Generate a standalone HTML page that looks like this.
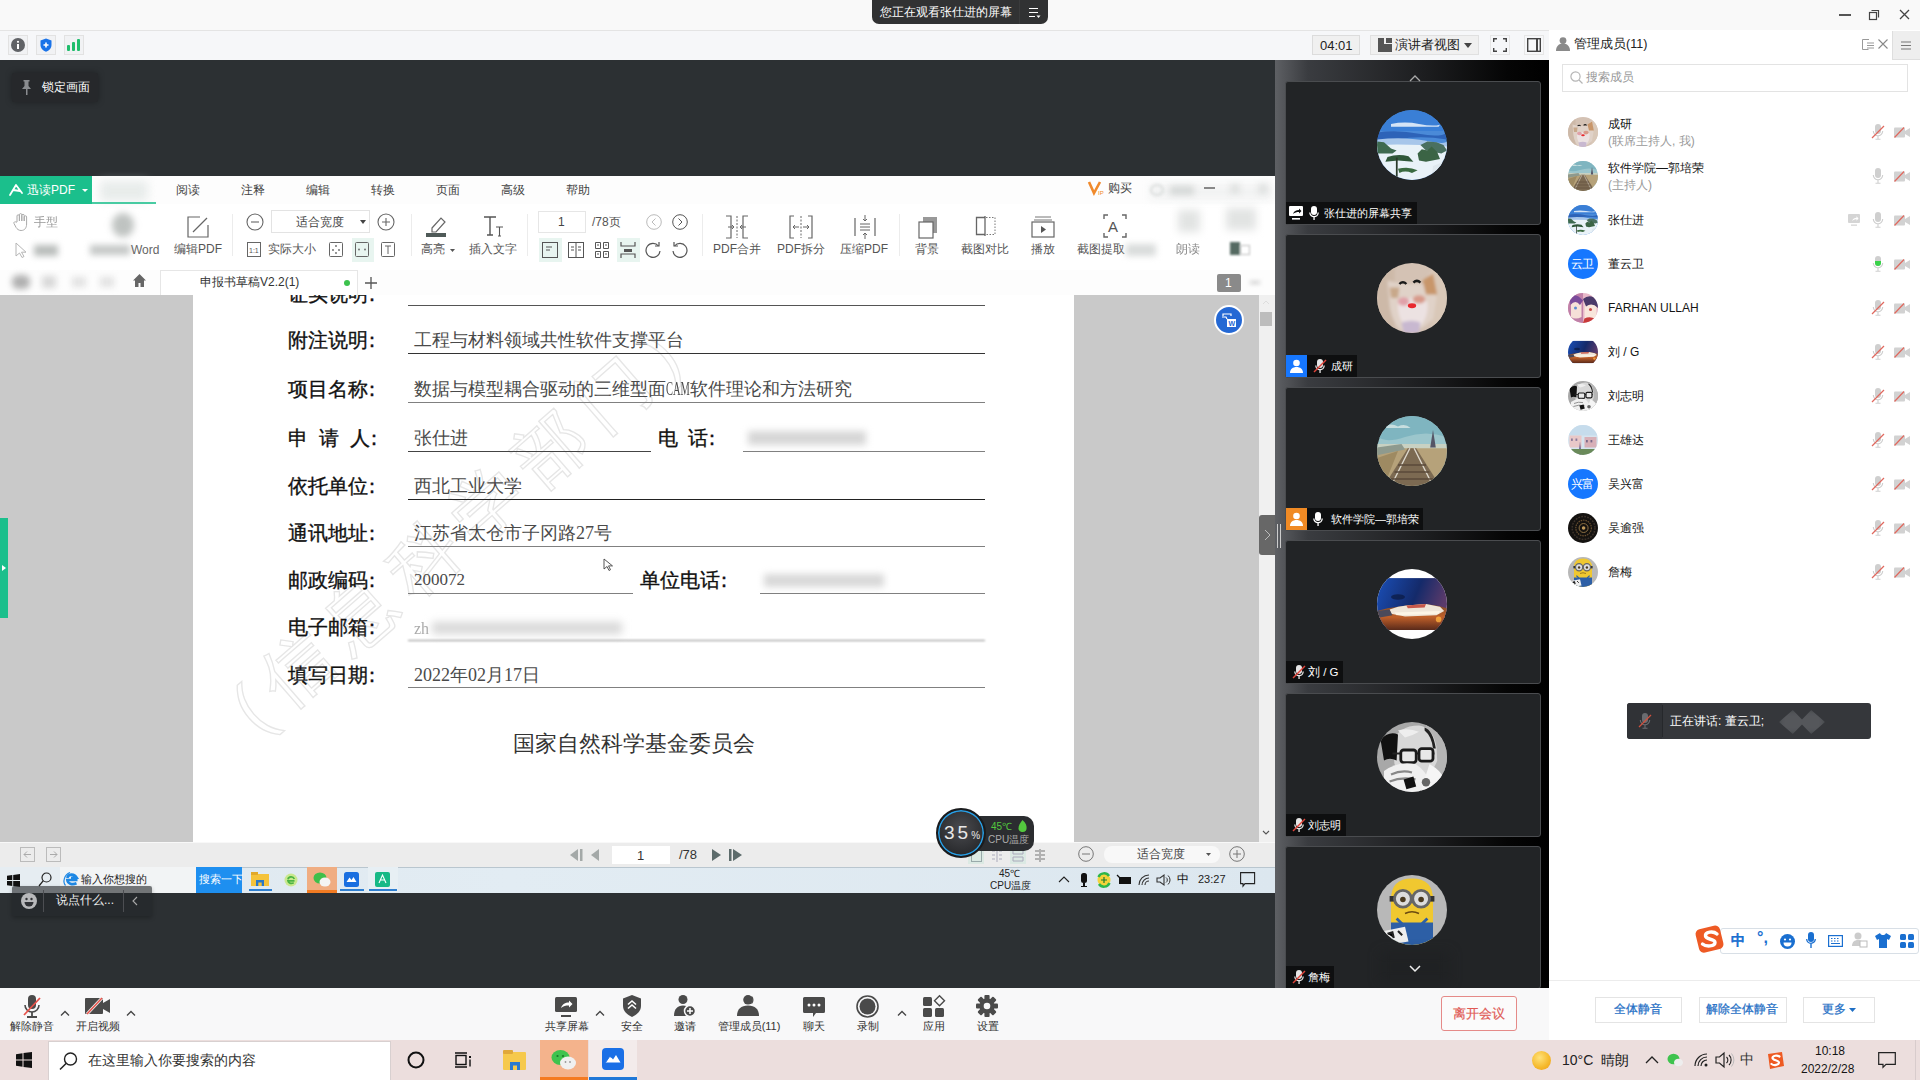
<!DOCTYPE html>
<html><head><meta charset="utf-8">
<style>
*{box-sizing:border-box}
html,body{margin:0;padding:0}
body{width:1920px;height:1080px;overflow:hidden;position:relative;font-family:"Liberation Sans",sans-serif;background:#f8f8f8;color:#222}
.a{position:absolute}
.t{position:absolute;white-space:nowrap;line-height:1}
svg{position:absolute;overflow:visible}
.lb{font-size:20px;color:#111;-webkit-text-stroke:.35px #111}
.vl{font-size:18px;color:#4a4a4a;font-family:"Liberation Serif",serif}
</style></head><body>

<!-- ===== title bar ===== -->
<div class="a" style="left:0;top:0;width:1920px;height:30px;background:#f9f9f9"></div>
<div class="a" style="left:0;top:30px;width:1549px;height:1px;background:#e4e4e4"></div>
<div class="a" style="left:872px;top:0;width:176px;height:24px;background:#313233;border-radius:0 0 7px 7px"></div>
<div class="a" style="left:1019px;top:0;width:1px;height:24px;background:#3a3b3c"></div>
<div class="t" style="left:880px;top:6px;font-size:12px;color:#fff">您正在观看张仕进的屏幕</div>
<svg style="left:1028px;top:7px" width="14" height="12"><path d="M1 1.5h9M1 5.5h9M1 9.5h6" stroke="#fff" stroke-width="1"/><path d="M8.5 8.5h4l-2 2.5z" fill="#fff"/></svg>
<!-- window controls -->
<div class="a" style="left:1839px;top:14px;width:12px;height:1.5px;background:#555"></div>
<svg style="left:1869px;top:9px" width="12" height="12"><rect x="0.5" y="3.5" width="7" height="7" fill="none" stroke="#444" stroke-width="1.2"/><path d="M2.5 1.5h7v7" fill="none" stroke="#444" stroke-width="1.2"/></svg>
<svg style="left:1899px;top:9px" width="12" height="12"><path d="M1 1l9 9M10 1l-9 9" stroke="#444" stroke-width="1.3"/></svg>

<!-- ===== toolbar row ===== -->
<div class="a" style="left:0;top:31px;width:1549px;height:29px;background:#f6f7f9"></div>
<div class="a" style="left:8px;top:35px;width:20px;height:20px;border:1px solid #e2e2e2;background:#f1f2f4"></div>
<svg style="left:11px;top:38px" width="14" height="14"><circle cx="7" cy="7" r="7" fill="#606266"/><rect x="6" y="6" width="2" height="5" fill="#fff"/><circle cx="7" cy="3.8" r="1.1" fill="#fff"/></svg>
<div class="a" style="left:36px;top:35px;width:20px;height:20px;border:1px solid #e2e2e2;background:#f1f2f4"></div>
<svg style="left:40px;top:38px" width="12" height="14"><path d="M6 0.5L11.5 2.5V7C11.5 10.5 9 12.5 6 13.8C3 12.5 0.5 10.5 0.5 7V2.5z" fill="#1a73e8"/><path d="M6 4.5v5M3.5 7h5" stroke="#fff" stroke-width="1.6"/></svg>
<div class="a" style="left:64px;top:35px;width:20px;height:20px;border:1px solid #e2e2e2;background:#f1f2f4"></div>
<svg style="left:67px;top:39px" width="14" height="12"><rect x="0" y="6" width="3" height="6" rx="1" fill="#1fbd6c"/><rect x="5" y="3" width="3" height="9" rx="1" fill="#1fbd6c"/><rect x="10" y="0" width="3" height="12" rx="1" fill="#1fbd6c"/></svg>

<!-- right controls -->
<div class="a" style="left:1312px;top:35px;width:48px;height:20px;border:1px solid #dcdcdc;background:#f0f0f0"></div>
<div class="t" style="left:1320px;top:39px;font-size:13px;color:#222">04:01</div>
<div class="a" style="left:1370px;top:35px;width:109px;height:20px;border:1px solid #e0e0e0;background:#f0f0f0"></div>
<svg style="left:1378px;top:38px" width="14" height="14"><path d="M0 0h6v6h8v8H0z" fill="#555"/><rect x="8" y="0" width="6" height="5" fill="#555"/></svg>
<div class="t" style="left:1395px;top:39px;font-size:12.5px;color:#222">演讲者视图</div>
<svg style="left:1464px;top:43px" width="8" height="5"><path d="M0 0h8L4 5z" fill="#444"/></svg>
<div class="a" style="left:1490px;top:35px;width:20px;height:20px;border:1px solid #e6e6e6"></div>
<svg style="left:1493px;top:38px" width="14" height="14"><path d="M0.7 4V0.7H4M10 0.7h3.3V4M13.3 10v3.3H10M4 13.3H0.7V10" fill="none" stroke="#444" stroke-width="1.4"/></svg>
<div class="a" style="left:1524px;top:35px;width:20px;height:20px;border:1px solid #e6e6e6"></div>
<svg style="left:1527px;top:38px" width="14" height="14"><rect x="0.7" y="0.7" width="12.6" height="12.6" fill="none" stroke="#444" stroke-width="1.4"/><rect x="9" y="1" width="2" height="12" fill="#444"/></svg>

<!-- ===== main dark share area ===== -->
<div class="a" style="left:0;top:60px;width:1275px;height:928px;background:#2c3033"></div>

<!-- ===== PDF window ===== -->
<div class="a" style="left:0;top:176px;width:1275px;height:717px;background:#fff"></div>
<!-- header row -->
<div class="a" style="left:0;top:176px;width:1275px;height:28px;background:#fdfdfd"></div>
<div class="a" style="left:0;top:176px;width:92px;height:28px;background:#1bbf8c"></div>
<svg style="left:9px;top:184px" width="14" height="12"><path d="M1 11L7 1M7 1L13 9M4 6l7 1" stroke="#fff" stroke-width="1.8" fill="none" stroke-linecap="round"/></svg>
<div class="t" style="left:27px;top:184px;font-size:12px;color:#fff">迅读PDF</div>
<svg style="left:82px;top:189px" width="6" height="4"><path d="M0 0h6L3 3z" fill="#fff"/></svg>
<div class="a" style="left:100px;top:181px;width:48px;height:20px;background:#dfe5e3;filter:blur(5px);opacity:.7"></div>
<div class="a" style="left:92px;top:202px;width:64px;height:2px;background:#1bbf8c;opacity:.8"></div>
<div class="t" style="left:176px;top:184px;font-size:12px;color:#444">阅读</div>
<div class="t" style="left:241px;top:184px;font-size:12px;color:#444">注释</div>
<div class="t" style="left:306px;top:184px;font-size:12px;color:#444">编辑</div>
<div class="t" style="left:371px;top:184px;font-size:12px;color:#444">转换</div>
<div class="t" style="left:436px;top:184px;font-size:12px;color:#444">页面</div>
<div class="t" style="left:501px;top:184px;font-size:12px;color:#444">高级</div>
<div class="t" style="left:566px;top:184px;font-size:12px;color:#444">帮助</div>
<!-- vip -->
<svg style="left:1088px;top:181px" width="18" height="14"><path d="M1 1l5 11l6-11" stroke="#f08a2c" stroke-width="2.6" fill="none"/><text x="10" y="14" font-size="6" fill="#f08a2c" font-family="Liberation Sans">IP</text></svg>
<div class="t" style="left:1108px;top:182px;font-size:12px;color:#444">购买</div>
<div class="a" style="left:1150px;top:184px;width:122px;height:16px;background:#f2f3f3;filter:blur(4px)"></div>
<div class="a" style="left:1150px;top:184px;width:14px;height:12px;border-radius:50%;border:2px solid #d9dcdb;filter:blur(1.5px)"></div>
<div class="a" style="left:1170px;top:186px;width:24px;height:9px;background:#d5d8d7;filter:blur(3px)"></div>
<div class="a" style="left:1204px;top:187px;width:11px;height:2px;background:#888;filter:blur(.6px)"></div>
<div class="a" style="left:1230px;top:184px;width:10px;height:10px;background:#e0e2e1;filter:blur(3px)"></div>
<div class="a" style="left:1258px;top:184px;width:10px;height:10px;background:#e0e2e1;filter:blur(3px)"></div>

<!-- ribbon row: left blurred tools -->
<svg style="left:13px;top:213px;filter:blur(.5px)" width="16" height="18"><path d="M4 9V3a1.2 1.2 0 0 1 2.4 0v5V1.8a1.2 1.2 0 0 1 2.4 0V8V2.5a1.2 1.2 0 0 1 2.4 0V8V4a1.2 1.2 0 0 1 2.4 0v7c0 4-2 6.5-5.5 6.5-2.5 0-4-1.5-5-3L1 10.5a1.2 1.2 0 0 1 2-1.3z" fill="none" stroke="#aaa" stroke-width="1"/></svg>
<div class="t" style="left:34px;top:216px;font-size:12px;color:#999;filter:blur(.6px)">手型</div>
<svg style="left:15px;top:242px;filter:blur(.4px)" width="12" height="16"><path d="M1 1v13l3.5-3 2.5 4.5 2-1-2.5-4.3H11z" fill="none" stroke="#b5b5b5" stroke-width="1"/></svg>
<div class="a" style="left:34px;top:245px;width:24px;height:11px;background:#b9bdbb;filter:blur(3px)"></div>
<div class="a" style="left:112px;top:213px;width:22px;height:24px;border-radius:50%;background:#bfc3c1;filter:blur(3.5px)"></div>
<div class="a" style="left:90px;top:245px;width:40px;height:10px;background:#c5c8c7;filter:blur(3px)"></div>
<div class="t" style="left:131px;top:244px;font-size:12px;color:#666">Word</div>
<svg style="left:187px;top:216px" width="22" height="22"><path d="M13 1H1v20h20V9" fill="none" stroke="#666" stroke-width="1.2"/><path d="M6 16L20 2" stroke="#666" stroke-width="1.2"/></svg>
<div class="t" style="left:174px;top:243px;font-size:12px;color:#555">编辑PDF</div>
<div class="a" style="left:232px;top:214px;width:1px;height:42px;background:#ececec"></div>
<!-- zoom -->
<svg style="left:246px;top:213px" width="18" height="18"><circle cx="9" cy="9" r="8" fill="none" stroke="#666" stroke-width="1.1"/><path d="M5 9h8" stroke="#666" stroke-width="1.1"/></svg>
<div class="a" style="left:271px;top:210px;width:99px;height:23px;border:1px solid #e3e3e3;background:#fff"></div>
<div class="t" style="left:296px;top:216px;font-size:12px;color:#444">适合宽度</div>
<svg style="left:360px;top:220px" width="6" height="4"><path d="M0 0h6L3 4z" fill="#444"/></svg>
<svg style="left:377px;top:213px" width="18" height="18"><circle cx="9" cy="9" r="8" fill="none" stroke="#666" stroke-width="1.1"/><path d="M5 9h8M9 5v8" stroke="#666" stroke-width="1.1"/></svg>
<svg style="left:247px;top:242px" width="15" height="15"><rect x="0.5" y="0.5" width="13" height="14" fill="none" stroke="#666" stroke-width="1"/><text x="2" y="11" font-size="7" fill="#555" font-family="Liberation Sans">1:1</text></svg>
<div class="t" style="left:268px;top:243px;font-size:12px;color:#555">实际大小</div>
<svg style="left:329px;top:242px" width="15" height="15"><rect x="0.5" y="0.5" width="13" height="14" rx="1" fill="none" stroke="#666" stroke-width="1"/><circle cx="7" cy="4" r=".9" fill="#666"/><circle cx="4" cy="8" r=".9" fill="#666"/><circle cx="10" cy="8" r=".9" fill="#666"/><circle cx="7" cy="11" r=".9" fill="#666"/></svg>
<div class="a" style="left:352px;top:238px;width:22px;height:24px;background:#e8f5f0"></div>
<svg style="left:355px;top:242px" width="15" height="15"><rect x="0.5" y="0.5" width="13" height="14" rx="1" fill="none" stroke="#666" stroke-width="1"/><circle cx="4" cy="7.5" r=".9" fill="#666"/><circle cx="10" cy="7.5" r=".9" fill="#666"/></svg>
<svg style="left:381px;top:242px" width="15" height="15"><rect x="0.5" y="0.5" width="13" height="14" rx="1" fill="none" stroke="#666" stroke-width="1"/><path d="M4 4h6M7 4v8" stroke="#666" stroke-width="1"/></svg>
<div class="a" style="left:411px;top:214px;width:1px;height:42px;background:#ececec"></div>
<!-- highlight / insert text -->
<svg style="left:424px;top:214px" width="24" height="24"><path d="M8 14l9-10 4 4-9 10h-4z" fill="none" stroke="#666" stroke-width="1.2"/><rect x="2" y="19" width="20" height="4" fill="#4f5a58"/></svg>
<div class="t" style="left:421px;top:243px;font-size:12px;color:#555">高亮</div>
<svg style="left:450px;top:249px" width="5" height="3"><path d="M0 0h5L2.5 3z" fill="#555"/></svg>
<svg style="left:483px;top:215px" width="22" height="22"><path d="M1 2h12M7 2v18M4 20h6" stroke="#555" stroke-width="1.4" fill="none"/><path d="M13 12h7M16.5 12v9M15 21h3" stroke="#555" stroke-width="1.1" fill="none"/></svg>
<div class="t" style="left:469px;top:243px;font-size:12px;color:#555">插入文字</div>
<div class="a" style="left:527px;top:214px;width:1px;height:42px;background:#ececec"></div>
<!-- page nav -->
<div class="a" style="left:538px;top:211px;width:48px;height:22px;border:1px solid #e6e6e6;background:#fff"></div>
<div class="t" style="left:558px;top:216px;font-size:12px;color:#444">1</div>
<div class="t" style="left:592px;top:216px;font-size:12px;color:#555">/78页</div>
<svg style="left:646px;top:214px" width="16" height="16"><circle cx="8" cy="8" r="7.3" fill="none" stroke="#bbb" stroke-width="1"/><path d="M9.5 4.5L6 8l3.5 3.5" fill="none" stroke="#bbb" stroke-width="1"/></svg>
<svg style="left:672px;top:214px" width="16" height="16"><circle cx="8" cy="8" r="7.3" fill="none" stroke="#555" stroke-width="1"/><path d="M6.5 4.5L10 8l-3.5 3.5" fill="none" stroke="#555" stroke-width="1"/></svg>
<div class="a" style="left:539px;top:238px;width:23px;height:24px;background:#e8f5f0"></div>
<svg style="left:542px;top:242px" width="16" height="16"><rect x="0.5" y="0.5" width="15" height="15" fill="none" stroke="#555" stroke-width="1"/><path d="M4 5h6M4 8h4" stroke="#555" stroke-width="1"/></svg>
<svg style="left:568px;top:242px" width="16" height="16"><rect x="0.5" y="0.5" width="15" height="15" fill="none" stroke="#555" stroke-width="1"/><path d="M8 1v14M3 5h3M10 5h3M3 8h3M10 8h3" stroke="#555" stroke-width="1"/></svg>
<svg style="left:594px;top:242px" width="16" height="16"><path d="M1.5 .5h5v6h-5zM9.5 .5h5v6h-5zM1.5 9.5h5v6h-5zM9.5 9.5h5v6h-5z" fill="none" stroke="#555" stroke-width="1"/><path d="M3 3h2M11 3h2M3 12h2M11 12h2" stroke="#555"/></svg>
<div class="a" style="left:617px;top:238px;width:23px;height:24px;background:#e8f5f0"></div>
<svg style="left:620px;top:242px" width="16" height="16"><path d="M1 0v4h14V0M1 16v-4h14v4" fill="none" stroke="#555" stroke-width="1.2"/><rect x="4" y="7" width="8" height="3" fill="#555"/></svg>
<svg style="left:645px;top:242px" width="17" height="17"><path d="M13.5 4A7 7 0 1 0 15 9" fill="none" stroke="#555" stroke-width="1.2"/><path d="M10 4h4V0" fill="none" stroke="#555" stroke-width="1.2"/></svg>
<svg style="left:671px;top:242px" width="17" height="17"><path d="M3.5 4A7 7 0 1 1 2 9" fill="none" stroke="#555" stroke-width="1.2"/><path d="M7 4H3V0" fill="none" stroke="#555" stroke-width="1.2"/></svg>
<div class="a" style="left:702px;top:214px;width:1px;height:42px;background:#ececec"></div>
<!-- merge/split/compress -->
<svg style="left:725px;top:215px" width="24" height="24"><path d="M1 1h5v22H1M23 1h-5v22h5" fill="none" stroke="#666" stroke-width="1.2"/><path d="M12 1v22" stroke="#666" stroke-width="1" stroke-dasharray="2 1.5"/><path d="M3 12h6M7 10l2 2-2 2M21 12h-6M17 10l-2 2 2 2" fill="none" stroke="#666" stroke-width="1"/></svg>
<div class="t" style="left:713px;top:243px;font-size:12px;color:#555">PDF合并</div>
<svg style="left:789px;top:215px" width="24" height="24"><path d="M5 1H1v22h4M19 1h4v22h-4" fill="none" stroke="#666" stroke-width="1.2"/><path d="M12 1v22" stroke="#666" stroke-width="1" stroke-dasharray="2 1.5"/><path d="M10 12H4M6 10l-2 2 2 2M14 12h6M18 10l2 2-2 2" fill="none" stroke="#666" stroke-width="1"/></svg>
<div class="t" style="left:777px;top:243px;font-size:12px;color:#555">PDF拆分</div>
<svg style="left:853px;top:215px" width="24" height="24"><path d="M2 3v18M22 3v18" stroke="#666" stroke-width="1.2"/><path d="M7 9h10M7 12h10M7 15h10" stroke="#666" stroke-width="1"/><path d="M12 0v6M10 4l2 2 2-2M12 24v-6M10 20l2-2 2 2" fill="none" stroke="#666" stroke-width="1"/></svg>
<div class="t" style="left:840px;top:243px;font-size:12px;color:#555">压缩PDF</div>
<div class="a" style="left:899px;top:214px;width:1px;height:42px;background:#ececec"></div>
<svg style="left:916px;top:215px" width="24" height="24"><rect x="7" y="2" width="14" height="16" fill="#999"/><rect x="3" y="7" width="14" height="16" fill="#fff" stroke="#666" stroke-width="1.2"/></svg>
<div class="t" style="left:915px;top:243px;font-size:12px;color:#555">背景</div>
<svg style="left:975px;top:216px" width="22" height="22"><path d="M10 1.5H1.5v17H10" fill="none" stroke="#666" stroke-width="1.3"/><path d="M10 0v20" stroke="#666" stroke-width="1.3"/><path d="M11 1.5h9v17h-9" fill="none" stroke="#777" stroke-width="1" stroke-dasharray="1.5 1.5"/></svg>
<div class="t" style="left:961px;top:243px;font-size:12px;color:#555">截图对比</div>
<svg style="left:1031px;top:215px" width="24" height="24"><path d="M4 2h16M3 5h18" stroke="#777" stroke-width="1"/><rect x="1" y="7" width="22" height="15" fill="none" stroke="#666" stroke-width="1.2"/><path d="M10 11v7l5-3.5z" fill="#555"/></svg>
<div class="t" style="left:1031px;top:243px;font-size:12px;color:#555">播放</div>
<svg style="left:1103px;top:214px" width="24" height="24"><path d="M1 5V1h4M19 1h4v4M23 19v4h-4M5 23H1v-4" fill="none" stroke="#666" stroke-width="1.4"/><text x="5" y="18" font-size="15" fill="#555" font-family="Liberation Sans">A</text></svg>
<div class="t" style="left:1077px;top:243px;font-size:12px;color:#555">截图提取</div>
<div class="a" style="left:1126px;top:244px;width:30px;height:12px;background:#d9dcdb;filter:blur(3px)"></div>
<div class="a" style="left:1178px;top:210px;width:22px;height:22px;background:#e2e4e3;filter:blur(4px)"></div>
<div class="t" style="left:1176px;top:243px;font-size:12px;color:#888;filter:blur(.6px)">朗读</div>
<div class="a" style="left:1226px;top:208px;width:30px;height:22px;background:#e2e4e3;filter:blur(4px)"></div>
<div class="a" style="left:1230px;top:242px;width:10px;height:13px;background:#556a62;filter:blur(1px)"></div>
<div class="a" style="left:1240px;top:245px;width:10px;height:10px;border:1px solid #bbb;filter:blur(.8px)"></div>

<!-- tab row -->
<div class="a" style="left:0;top:270px;width:1275px;height:25px;background:#fdfdfd"></div>
<div class="a" style="left:12px;top:275px;width:18px;height:14px;border-radius:6px;background:#b0b0b0;filter:blur(3px)"></div>
<div class="a" style="left:42px;top:276px;width:14px;height:12px;background:#d8d8d8;filter:blur(3px)"></div>
<div class="a" style="left:72px;top:277px;width:14px;height:10px;background:#e2e2e2;filter:blur(3px)"></div>
<div class="a" style="left:100px;top:277px;width:14px;height:10px;background:#e2e2e2;filter:blur(3px)"></div>
<svg style="left:132px;top:273px" width="15" height="15"><path d="M7.5 1L1 7.5h2V14h3.5v-4h2v4H12V7.5h2z" fill="#666"/></svg>
<div class="a" style="left:160px;top:270px;width:198px;height:26px;background:#fff;border:1px solid #e6e6e6;border-bottom:none"></div>
<div class="t" style="left:200px;top:276px;font-size:12px;color:#333">申报书草稿V2.2(1)</div>
<div class="a" style="left:344px;top:280px;width:6px;height:6px;border-radius:50%;background:#3cc24d"></div>
<svg style="left:365px;top:277px" width="12" height="12"><path d="M6 0v12M0 6h12" stroke="#555" stroke-width="1.3"/></svg>
<div class="a" style="left:1217px;top:274px;width:24px;height:18px;background:#8a8a8a;border-radius:2px"></div>
<div class="t" style="left:1225px;top:277px;font-size:12px;color:#fff">1</div>
<div class="a" style="left:1250px;top:281px;width:10px;height:3px;background:#ccc;filter:blur(2px)"></div>

<!-- page area -->
<div class="a" style="left:0;top:295px;width:1259px;height:547px;background:#c9c9c9"></div>
<div class="a" style="left:1259px;top:295px;width:16px;height:547px;background:#f0f0f0"></div>
<div class="a" style="left:1260px;top:312px;width:12px;height:14px;background:#bdbdbd"></div>
<svg style="left:1262px;top:299px" width="8" height="6"><path d="M1 5l3-3 3 3" fill="none" stroke="#ddd" stroke-width="1"/></svg>
<svg style="left:1262px;top:830px" width="8" height="6"><path d="M1 1l3 3 3-3" fill="none" stroke="#555" stroke-width="1.1"/></svg>
<div class="a" style="left:193px;top:295px;width:881px;height:547px;background:#fff"></div>
<!-- green side tab -->
<div class="a" style="left:0;top:518px;width:8px;height:100px;background:#1bbf8c"></div>
<svg style="left:2px;top:565px" width="4" height="6"><path d="M0 0l4 3-4 3z" fill="#fff"/></svg>
<!-- collapse handle right -->
<div class="a" style="left:1259px;top:515px;width:16px;height:40px;background:#676767;border-radius:3px 0 0 3px"></div>
<svg style="left:1264px;top:529px" width="7" height="12"><path d="M1 1l5 5-5 5" fill="none" stroke="#bbb" stroke-width="1"/></svg>
<!-- word convert -->
<div class="a" style="left:1214px;top:305px;width:30px;height:30px;border-radius:50%;background:#2468d4;border:2px solid #fff"></div>
<svg style="left:1220px;top:311px" width="18" height="18"><path d="M3 5V3h8v2" fill="none" stroke="#fff" stroke-width="1.2"/><path d="M2 6h4l1 2" fill="none" stroke="#fff" stroke-width="1.2"/><rect x="7" y="8" width="9" height="8" fill="#fff"/><text x="8.5" y="15" font-size="7" fill="#2468d4" font-family="Liberation Sans" font-weight="bold">W</text></svg>
<!-- document content -->
<div class="a" style="left:193px;top:295px;width:881px;height:546px;overflow:hidden">
<div class="t" style="left:72px;top:378px;font-size:70px;color:transparent;-webkit-text-stroke:1.3px #e6e6e6;transform:rotate(-41deg);transform-origin:0 100%;letter-spacing:14px;line-height:70px">(信息科学部门)</div>

<div class="t lb" style="left:95px;top:-11px">证实说明<span style="position:relative;left:-6px">：</span></div>
<div class="a" style="left:215px;top:10px;width:577px;height:1.3px;background:#555"></div>

<div class="t lb" style="left:95px;top:35px">附注说明<span style="position:relative;left:-6px">：</span></div>
<div class="t vl" style="left:221px;top:36px">工程与材料领域共性软件支撑平台</div>
<div class="a" style="left:215px;top:58px;width:577px;height:1.3px;background:#333"></div>

<div class="t lb" style="left:95px;top:84px">项目名称<span style="position:relative;left:-6px">：</span></div>
<div class="t vl" style="left:221px;top:85px">数据与模型耦合驱动的三维型面<span style="display:inline-block;width:24px;transform:scaleX(.58);transform-origin:0 50%">CAM</span>软件理论和方法研究</div>
<div class="a" style="left:215px;top:107px;width:577px;height:1.3px;background:#808080"></div>

<div class="t lb" style="left:95px;top:133px">申<span style="margin-left:11px">请</span><span style="margin-left:11px">人</span><span style="position:relative;left:-6px">：</span></div>
<div class="t vl" style="left:221px;top:134px">张仕进</div>
<div class="a" style="left:215px;top:156px;width:243px;height:1.3px;background:#444"></div>
<div class="t lb" style="left:465px;top:133px">电<span style="margin-left:10px">话</span><span style="position:relative;left:-6px">：</span></div>
<div class="a" style="left:555px;top:136px;width:118px;height:14px;background:#d6d6d6;filter:blur(3.5px)"></div>
<div class="a" style="left:550px;top:156px;width:242px;height:1.3px;background:#808080"></div>

<div class="t lb" style="left:95px;top:181px">依托单位<span style="position:relative;left:-6px">：</span></div>
<div class="t vl" style="left:221px;top:182px">西北工业大学</div>
<div class="a" style="left:215px;top:204px;width:577px;height:1.3px;background:#222"></div>

<div class="t lb" style="left:95px;top:228px">通讯地址<span style="position:relative;left:-6px">：</span></div>
<div class="t vl" style="left:221px;top:229px">江苏省太仓市子冈路27号</div>
<div class="a" style="left:215px;top:251px;width:577px;height:1.3px;background:#808080"></div>

<div class="t lb" style="left:95px;top:275px">邮政编码<span style="position:relative;left:-6px">：</span></div>
<div class="t vl" style="left:221px;top:276px;font-family:'Liberation Serif',serif;font-size:17px">200072</div>
<div class="a" style="left:215px;top:298px;width:225px;height:1.3px;background:#808080"></div>
<div class="t lb" style="left:447px;top:275px">单位电话<span style="position:relative;left:-6px">：</span></div>
<div class="a" style="left:571px;top:279px;width:120px;height:13px;background:#d8d8d8;filter:blur(3.5px)"></div>
<div class="a" style="left:567px;top:298px;width:225px;height:1.3px;background:#808080"></div>

<div class="t lb" style="left:95px;top:322px">电子邮箱<span style="position:relative;left:-6px">：</span></div>
<div class="t" style="left:221px;top:326px;font-size:16px;font-family:'Liberation Serif',serif;color:#aaa;filter:blur(.6px)">zh</div>
<div class="a" style="left:239px;top:327px;width:190px;height:12px;background:#d8d8d8;filter:blur(4px)"></div>
<div class="a" style="left:215px;top:345px;width:577px;height:1.3px;background:#888;filter:blur(.8px)"></div>

<div class="t lb" style="left:95px;top:370px">填写日期<span style="position:relative;left:-6px">：</span></div>
<div class="t vl" style="left:221px;top:371px">2022年02月17日</div>
<div class="a" style="left:215px;top:392px;width:577px;height:1.3px;background:#808080"></div>

<div class="t" style="left:320px;top:438px;font-size:22px;color:#333">国家自然科学基金委员会</div>

</div>
<!-- mouse cursor -->
<svg style="left:603px;top:558px" width="10" height="14"><path d="M1 1v10l3-2.5 2 4 1.5-.8-2-3.8h4z" fill="#fff" stroke="#444" stroke-width=".9"/></svg>

<!-- status bar -->
<div class="a" style="left:0;top:842px;width:1275px;height:25px;background:#ececec;border-top:1px solid #f8f8f8"></div>
<svg style="left:20px;top:847px" width="15" height="15"><rect x=".5" y=".5" width="14" height="14" fill="none" stroke="#bbb"/><path d="M11 7.5H4M7 4.5l-3 3 3 3" fill="none" stroke="#aaa"/></svg>
<svg style="left:46px;top:847px" width="15" height="15"><rect x=".5" y=".5" width="14" height="14" fill="none" stroke="#bbb"/><path d="M4 7.5h7M8 4.5l3 3-3 3" fill="none" stroke="#aaa"/></svg>
<svg style="left:570px;top:849px" width="13" height="12"><path d="M8 0v12L0 6z" fill="#a4a9a8"/><rect x="10" y="0" width="2.5" height="12" fill="#a4a9a8"/></svg>
<svg style="left:591px;top:849px" width="9" height="12"><path d="M8 0v12L0 6z" fill="#a4a9a8"/></svg>
<div class="a" style="left:612px;top:846px;width:58px;height:18px;background:#fff"></div>
<div class="t" style="left:637px;top:849px;font-size:13px;color:#333">1</div>
<div class="t" style="left:679px;top:848px;font-size:13px;color:#333">/78</div>
<svg style="left:712px;top:849px" width="9" height="12"><path d="M0 0v12l9-6z" fill="#5c6b6b"/></svg>
<svg style="left:729px;top:849px" width="13" height="12"><rect x="0" y="0" width="2.5" height="12" fill="#5c6b6b"/><path d="M4 0v12l9-6z" fill="#5c6b6b"/></svg>
<svg style="left:1078px;top:846px" width="16" height="16"><circle cx="8" cy="8" r="7.3" fill="none" stroke="#777" stroke-width="1"/><path d="M4 8h8" stroke="#777"/></svg>
<div class="a" style="left:1104px;top:846px;width:116px;height:17px;background:#f8f8f8;border-radius:8px"></div>
<div class="t" style="left:1137px;top:848px;font-size:12px;color:#444">适合宽度</div>
<svg style="left:1206px;top:853px" width="5" height="3"><path d="M0 0h5L2.5 3z" fill="#555"/></svg>
<svg style="left:1229px;top:846px" width="16" height="16"><circle cx="8" cy="8" r="7.3" fill="none" stroke="#777" stroke-width="1"/><path d="M4 8h8M8 4v8" stroke="#777"/></svg>
<!-- layout icons -->
<div class="a" style="left:968px;top:848px;width:16px;height:16px;background:#dbe9e3"></div>
<svg style="left:971px;top:849px" width="11" height="13"><rect x=".5" y=".5" width="10" height="12" fill="none" stroke="#9aa"/></svg>
<svg style="left:991px;top:849px" width="12" height="13"><path d="M1 2h3M1 6h3M1 10h3M8 2h3M8 6h3M8 10h3M6 0v13" stroke="#aab" fill="none"/></svg>
<div class="a" style="left:1010px;top:848px;width:16px;height:16px;background:#dbe9e3"></div>
<svg style="left:1012px;top:849px" width="12" height="13"><path d="M1 1h10v4H1zM1 8h10v4H1z" fill="none" stroke="#aab"/></svg>
<svg style="left:1034px;top:849px" width="12" height="13"><path d="M1 2h4M1 6h4M1 10h4M7 2h4M7 6h4M7 10h4M6 0v13" stroke="#777" fill="none"/></svg>

<!-- inner taskbar -->
<div class="a" style="left:0;top:867px;width:1275px;height:26px;background:linear-gradient(90deg,#dfe8ef,#e2ecf3 40%,#dce7ef)"></div>
<div class="a" style="left:0;top:867px;width:1275px;height:1px;background:#b9c6cf"></div>
<div class="a" style="left:0;top:867px;width:60px;height:26px;background:#e6edf2"></div>
<svg style="left:7px;top:874px" width="13" height="13"><path d="M0 1.8L5.3 1v5H0zM6.2.9L13 0v6H6.2zM0 7h5.3v5L0 11.2zM6.2 7H13v6l-6.8-.9z" fill="#111"/></svg>
<svg style="left:38px;top:872px" width="14" height="16"><circle cx="8.5" cy="5.5" r="4.5" fill="none" stroke="#222" stroke-width="1.2"/><path d="M5.3 8.7L1 14" stroke="#222" stroke-width="1.3"/></svg>
<div class="a" style="left:60px;top:867px;width:136px;height:26px;background:#f2f4f5"></div>
<svg style="left:63px;top:871px" width="16" height="16"><path d="M14.5 9H4.3C4.6 12.5 9 14.2 13.5 12.3" fill="none" stroke="#1e88e5" stroke-width="2.6"/><path d="M4.3 7C5 3 11 2 13.8 6.8H8" fill="none" stroke="#1e88e5" stroke-width="2.6"/><path d="M2.5 14.5C-.5 11 1 4 7 1.5" fill="none" stroke="#1e88e5" stroke-width="1.2"/></svg>
<div class="t" style="left:81px;top:874px;font-size:11px;color:#222">输入你想搜的</div>
<div class="a" style="left:196px;top:867px;width:46px;height:26px;background:#1e8ff0"></div>
<div class="t" style="left:199px;top:874px;font-size:11px;color:#fff">搜索一下</div>
<!-- apps -->
<svg style="left:251px;top:872px" width="18" height="15"><rect x="0" y="2" width="18" height="12" fill="#f5c33b"/><rect x="0" y="0" width="7" height="3" fill="#e2a92a"/><path d="M5 14V8h8v6h-2.3v-3.5H7.3V14z" fill="#2a78c8"/></svg>
<div class="a" style="left:249px;top:889px;width:23px;height:2px;background:#2f7fd0"></div>
<svg style="left:284px;top:873px" width="14" height="14"><circle cx="7" cy="7" r="6.5" fill="#c9e88f"/><path d="M10.5 7.8H4C4.3 10 7 11 9.7 9.7M4 6.3C4.5 3.5 9 3 10.3 6" fill="none" stroke="#4bb543" stroke-width="1.8"/></svg>
<div class="a" style="left:307px;top:867px;width:30px;height:25px;background:#f0ad82"></div>
<div class="a" style="left:307px;top:890px;width:30px;height:3px;background:#f27b22"></div>
<svg style="left:313px;top:872px" width="18" height="15"><ellipse cx="7" cy="6" rx="6.5" ry="5.5" fill="#3fbf4a"/><ellipse cx="12" cy="10" rx="5.5" ry="4.5" fill="#f4f4f4"/></svg>
<svg style="left:344px;top:872px" width="15" height="15"><rect width="15" height="15" rx="2.5" fill="#1a6fe0"/><path d="M2.5 10L5.5 5.5L7.5 8L9.5 5L12.5 10z" fill="#fff"/></svg>
<div class="a" style="left:340px;top:889px;width:24px;height:2px;background:#2f7fd0"></div>
<div class="a" style="left:368px;top:867px;width:30px;height:25px;background:#e7eff4"></div>
<svg style="left:375px;top:872px" width="15" height="15"><rect width="15" height="15" rx="2" fill="#17b986"/><path d="M4 11l3.5-8L11 11M5.5 8h4" fill="none" stroke="#fff" stroke-width="1.1"/></svg>
<div class="a" style="left:369px;top:889px;width:28px;height:2px;background:#2f7fd0"></div>
<!-- right tray -->
<div class="t" style="left:999px;top:869px;font-size:10px;color:#222">45℃</div>
<div class="t" style="left:990px;top:881px;font-size:10px;color:#222">CPU温度</div>
<svg style="left:1058px;top:876px" width="12" height="7"><path d="M1 6l5-5 5 5" fill="none" stroke="#222" stroke-width="1.1"/></svg>
<svg style="left:1080px;top:873px" width="8" height="14"><rect x="1" y="0" width="6" height="10" rx="2.5" fill="#111"/><rect x="3" y="10" width="2" height="3" fill="#111"/><rect x="1" y="13" width="6" height="1" fill="#111"/></svg>
<svg style="left:1097px;top:873px" width="14" height="14"><circle cx="7" cy="7" r="6.5" fill="#f4d33a"/><path d="M1.5 4A6 6 0 0 1 12 3" fill="none" stroke="#2db64a" stroke-width="2.5"/><path d="M12.5 10A6 6 0 0 1 2 11" fill="none" stroke="#2db64a" stroke-width="2.5"/><path d="M7 4v6M4 7h6" stroke="#1a7e2e" stroke-width="1.2"/></svg>
<svg style="left:1117px;top:875px" width="15" height="10"><rect x="2" y="2" width="12" height="7" fill="#111"/><path d="M0 0l3 3" stroke="#111" stroke-width="1.2"/></svg>
<svg style="left:1138px;top:874px" width="14" height="12"><path d="M1 11A10 10 0 0 1 11 1M4 11A7 7 0 0 1 11 4M7 11A4 4 0 0 1 11 7" fill="none" stroke="#333" stroke-width="1.1"/></svg>
<svg style="left:1156px;top:873px" width="14" height="14"><path d="M1 5h3l4-3v10l-4-3H1z" fill="none" stroke="#333" stroke-width="1.1"/><path d="M10 4.5a3 3 0 0 1 0 5M12 2.5a6 6 0 0 1 0 9" fill="none" stroke="#333" stroke-width="1"/></svg>
<div class="t" style="left:1177px;top:873px;font-size:12px;color:#111">中</div>
<div class="t" style="left:1198px;top:874px;font-size:11px;color:#222">23:27</div>
<svg style="left:1240px;top:872px" width="16" height="15"><path d="M.6.6h14v11H5l-2 2.5V11.6H.6z" fill="none" stroke="#222" stroke-width="1.1"/></svg>

<!-- lock overlay -->
<div class="a" style="left:12px;top:73px;width:86px;height:29px;background:#26282b;border-radius:2px;box-shadow:0 0 6px rgba(0,0,0,.35)"></div>
<svg style="left:21px;top:80px" width="11" height="15"><path d="M2.5 0h6v1.5h-1v4.5l2.5 3H1l2.5-3V1.5h-1z" fill="#8a8c90"/><rect x="5" y="9" width="1.5" height="6" fill="#8a8c90"/></svg>
<div class="t" style="left:42px;top:81px;font-size:12px;color:#fff">锁定画面</div>

<!-- chat input overlay -->
<div class="a" style="left:12px;top:886px;width:140px;height:30px;background:rgba(36,38,42,.62);border-radius:2px;box-shadow:0 2px 4px rgba(0,0,0,.25)"></div>
<svg style="left:21px;top:893px" width="16" height="16"><circle cx="8" cy="8" r="8" fill="#b8b9bb"/><circle cx="5.5" cy="6" r="1.2" fill="#303236"/><circle cx="10.5" cy="6" r="1.2" fill="#303236"/><path d="M3.5 9h9a4.5 4.5 0 0 1-9 0z" fill="#303236"/></svg>
<div class="a" style="left:43px;top:890px;width:1px;height:22px;background:#4c4e52"></div>
<div class="t" style="left:56px;top:894px;font-size:12px;color:#eee">说点什么...</div>
<div class="a" style="left:123px;top:890px;width:1px;height:22px;background:#4c4e52"></div>
<svg style="left:132px;top:896px" width="6" height="10"><path d="M5 1L1 5l4 4" fill="none" stroke="#aaa" stroke-width="1.1"/></svg>

<!-- CPU widget -->
<div class="a" style="left:970px;top:816px;width:64px;height:35px;background:#2b2d30;border-radius:10px"></div>
<div class="a" style="left:936px;top:808px;width:50px;height:50px;border-radius:50%;background:radial-gradient(circle at 50% 40%,#4a4b4f,#2a2b2e 70%);border:2px solid #1a1b1d;box-shadow:inset 0 0 0 1.5px #27a0e8"></div>
<div class="t" style="left:944px;top:823px;font-size:19px;color:#e8e8e8;font-family:'Liberation Sans',sans-serif;letter-spacing:3px">35<span style="font-size:10px;letter-spacing:0">%</span></div>
<div class="t" style="left:991px;top:822px;font-size:10px;color:#53c83e">45℃</div>
<svg style="left:1018px;top:820px" width="9" height="12"><path d="M4.5 0C8 3 9 6 8.5 9S5 12 4.5 12S0.5 11.5.5 8.5S2 3 4.5 0z" fill="#53c83e"/></svg>
<div class="t" style="left:988px;top:835px;font-size:10px;color:#aaa">CPU温度</div>


<!-- ===== video strip ===== -->
<div class="a" style="left:1275px;top:60px;width:274px;height:928px;background:linear-gradient(90deg,#5e6064 0%,#3a3c40 12%,#1c1d1f 55%,#050505 85%,#000 100%)"></div>
<div class="a" style="left:1275px;top:60px;width:274px;height:928px;background:linear-gradient(90deg,rgba(0,0,0,0) 0%,rgba(0,0,0,0) 100%)"></div>
<div class="a" style="left:1285px;top:81px;width:256px;height:144px;background:#222426;border:1px solid #4a4c4f;border-radius:3px"></div>
<svg style="left:1377px;top:110px" width="70" height="70" viewBox="0 0 100 100"><defs><clipPath id="ct110"><circle cx="50" cy="50" r="50"/></clipPath></defs><g clip-path="url(#ct110)"><rect width="100" height="100" fill="#4a8ad8"/>
<rect width="100" height="30" fill="#3a7fd6"/>
<path d="M20 20 Q40 16 60 20 T90 21 L88 24 Q60 24 20 24z" fill="#e6f0fa" opacity=".9"/>
<path d="M0 32 Q30 28 60 34 T100 32 V42 Q60 36 30 42 T0 40z" fill="#2d63b8"/>
<path d="M0 42 Q40 38 70 44 T100 44 V56 H0z" fill="#a7c6ea"/>
<path d="M0 50 Q40 48 100 52 V100 H0z" fill="#e9f2f8"/>
<path d="M0 45 L10 46 L20 55 L28 58 L22 62 L0 62z" fill="#3e6a50"/>
<path d="M62 50 L72 45 L85 46 L95 50 L100 58 L92 62 L70 58z" fill="#4a7060"/>
<path d="M58 62 L64 56 L72 58 L78 52 L86 60 L90 70 L70 74 L60 72z" fill="#3b6445"/>
<path d="M15 67 Q30 62 45 66 L52 74 L30 72 L12 74z" fill="#30583a"/>
<rect x="27" y="68" width="2.5" height="30" fill="#2a3a2a"/>
<path d="M30 84 Q45 80 58 86 L50 90 Q40 86 32 90z" fill="#3a6a40"/>
<path d="M80 80 L100 72 V100 H78z" fill="#dfe8ee"/></g></svg>
<div class="a" style="left:1286px;top:202px;width:131px;height:22px;background:#0e0f10"></div>
<svg style="left:1289px;top:206px" width="14" height="14"><rect x="0" y="0" width="14" height="10" rx="1" fill="#fff"/><path d="M4 8c1-3 3-4 6-4V2.5L12.5 5 10 7.5V6C7.5 6 6 6.5 4 8z" fill="#0e0f10"/><rect x="3" y="12" width="8" height="1.6" fill="#fff"/></svg>
<svg style="left:1309px;top:206px" width="10" height="15"><rect x="2" y="0" width="6" height="9" rx="3" fill="#fff"/><path d="M.8 6.5a4.2 4.2 0 0 0 8.4 0" fill="none" stroke="#fff" stroke-width="1.3"/><rect x="4.4" y="11" width="1.3" height="3" fill="#fff"/></svg>
<div class="t" style="left:1324px;top:208px;font-size:11px;color:#fff">张仕进的屏幕共享</div>
<div class="a" style="left:1285px;top:234px;width:256px;height:144px;background:#222426;border:1px solid #4a4c4f;border-radius:3px"></div>
<svg style="left:1377px;top:263px" width="70" height="70" viewBox="0 0 100 100"><defs><clipPath id="ct263"><circle cx="50" cy="50" r="50"/></clipPath></defs><g clip-path="url(#ct263)"><defs><filter id="cbt263"><feGaussianBlur stdDeviation="2.5"/></filter></defs>
<rect width="100" height="100" fill="#d4c2b4"/>
<g filter="url(#cbt263)">
<rect x="0" y="0" width="25" height="100" fill="#cdb9a8"/>
<rect x="78" y="0" width="22" height="100" fill="#d9c8b8"/>
<path d="M15 25 L35 30 L65 30 L78 12 L85 50 L80 80 Q60 100 40 100 Q22 90 18 60z" fill="#e0d2c8"/>
<path d="M65 25 L80 15 L86 45 L70 45z" fill="#c8966a"/>
<path d="M18 35 L32 35 L30 50 L20 50z" fill="#c8a88a"/>
<path d="M30 55 Q50 45 72 55 Q75 85 50 100 Q28 85 30 55z" fill="#ece2e2"/>
<ellipse cx="38" cy="55" rx="8" ry="6" fill="#e0a0a8"/>
<ellipse cx="60" cy="52" rx="9" ry="6" fill="#d89a8a"/>
<path d="M35 85 Q50 80 62 85 L60 100 H38z" fill="#c8b8d0"/>
</g>
<path d="M32 30 q5-5 10 0M52 28 q5-5 10 0" stroke="#1a1a1a" stroke-width="3.5" fill="none"/>
<ellipse cx="50" cy="61" rx="6" ry="3.5" fill="#e8282e"/></g></svg>
<div class="a" style="left:1286px;top:355px;width:71px;height:22px;background:#0e0f10"></div>
<div class="a" style="left:1286px;top:355px;width:21px;height:22px;background:#1677ff"></div>
<svg style="left:1290px;top:359px" width="13" height="14"><circle cx="6.5" cy="4" r="3.3" fill="#fff"/><path d="M0 14c0-4 3-6 6.5-6s6.5 2 6.5 6z" fill="#fff"/></svg>
<svg style="left:1313px;top:359px" width="14" height="15"><rect x="4" y="0" width="6" height="9" rx="3" fill="#e6e6e6"/><path d="M2.8 6.5a4.2 4.2 0 0 0 8.4 0" fill="none" stroke="#e6e6e6" stroke-width="1.3"/><rect x="6.4" y="11" width="1.3" height="3" fill="#e6e6e6"/><path d="M1 13L13 1" stroke="#e0443a" stroke-width="1.4"/></svg>
<div class="t" style="left:1331px;top:361px;font-size:11px;color:#fff">成研</div>
<div class="a" style="left:1285px;top:387px;width:256px;height:144px;background:#222426;border:1px solid #4a4c4f;border-radius:3px"></div>
<svg style="left:1377px;top:416px" width="70" height="70" viewBox="0 0 100 100"><defs><clipPath id="ct416"><circle cx="50" cy="50" r="50"/></clipPath></defs><g clip-path="url(#ct416)"><rect width="100" height="100" fill="#9cc6cc"/>
<path d="M0 0 H100 V30 Q70 20 40 30 T0 28z" fill="#7fb5c0"/>
<path d="M10 15 q10-6 20 0 q10-5 18 2 H10z" fill="#d9e8e6" opacity=".8"/>
<rect y="40" width="100" height="8" fill="#c8d1c2"/>
<path d="M0 46 H100 V100 H0z" fill="#b6a27a"/>
<path d="M0 45 L35 40 L40 48 L0 56z" fill="#8e9a8e"/>
<path d="M80 20 L84 45 L76 45z" fill="#556"/>
<path d="M44 46 L56 46 L90 100 L10 100z" fill="#7c6a52"/>
<path d="M47 46 L20 100 M53 46 L80 100" stroke="#ddd8cc" stroke-width="2"/>
<path d="M30 70 H70 M25 80 H75 M20 90 H80" stroke="#5a4a3a" stroke-width="2"/>
<path d="M0 60 L30 50 L10 100 H0z" fill="#9e8a62"/></g></svg>
<div class="a" style="left:1286px;top:508px;width:137px;height:22px;background:#0e0f10"></div>
<div class="a" style="left:1286px;top:508px;width:21px;height:22px;background:#f08a24"></div>
<svg style="left:1290px;top:512px" width="13" height="14"><circle cx="6.5" cy="4" r="3.3" fill="#fff"/><path d="M0 14c0-4 3-6 6.5-6s6.5 2 6.5 6z" fill="#fff"/></svg>
<svg style="left:1313px;top:512px" width="10" height="15"><rect x="2" y="0" width="6" height="9" rx="3" fill="#fff"/><path d="M.8 6.5a4.2 4.2 0 0 0 8.4 0" fill="none" stroke="#fff" stroke-width="1.3"/><rect x="4.4" y="11" width="1.3" height="3" fill="#fff"/></svg>
<div class="t" style="left:1331px;top:514px;font-size:11px;color:#fff">软件学院—郭培荣</div>
<div class="a" style="left:1285px;top:540px;width:256px;height:144px;background:#222426;border:1px solid #4a4c4f;border-radius:3px"></div>
<svg style="left:1377px;top:569px" width="70" height="70" viewBox="0 0 100 100"><defs><clipPath id="ct569"><circle cx="50" cy="50" r="50"/></clipPath></defs><g clip-path="url(#ct569)"><defs><linearGradient id="psky" x1="0" y1="0" x2="1" y2="0.3"><stop offset="0" stop-color="#1a4fb8"/><stop offset=".6" stop-color="#142a6a"/><stop offset="1" stop-color="#5a3a6a"/></linearGradient><linearGradient id="pbase" x1="0" y1="0" x2="0" y2="1"><stop offset="0" stop-color="#7a4a2a"/><stop offset=".5" stop-color="#c0602a"/><stop offset="1" stop-color="#5a2a1a"/></linearGradient></defs>
<rect width="100" height="100" fill="#fff"/>
<rect y="13" width="100" height="74" fill="url(#psky)"/>
<ellipse cx="30" cy="40" rx="10" ry="4" fill="#0c1a40" opacity=".7"/>
<path d="M0 60 L15 56 L30 54 L42 52 L70 50 L88 53 L100 56 V87 H0z" fill="url(#pbase)"/>
<path d="M18 58 L30 54 L42 52 L70 50 L90 54 L96 60 L85 66 L40 68 L20 64z" fill="#f0e6d8"/>
<path d="M42 52 L70 50 L68 55 L44 56z" fill="#c8584a"/>
<path d="M25 62 L90 60 L88 64 L28 66z" fill="#fff8e8" opacity=".8"/>
<circle cx="88" cy="72" r="4" fill="#ffb040" opacity=".8"/>
<path d="M0 60 L18 58 L22 66 L0 70z" fill="#4a4a5a"/></g></svg>
<div class="a" style="left:1286px;top:661px;width:57px;height:22px;background:#0e0f10"></div>
<svg style="left:1292px;top:665px" width="14" height="15"><rect x="4" y="0" width="6" height="9" rx="3" fill="#e6e6e6"/><path d="M2.8 6.5a4.2 4.2 0 0 0 8.4 0" fill="none" stroke="#e6e6e6" stroke-width="1.3"/><rect x="6.4" y="11" width="1.3" height="3" fill="#e6e6e6"/><path d="M1 13L13 1" stroke="#e0443a" stroke-width="1.4"/></svg>
<div class="t" style="left:1308px;top:667px;font-size:11.5px;color:#fff">刘 / G</div>
<div class="a" style="left:1285px;top:693px;width:256px;height:144px;background:#222426;border:1px solid #4a4c4f;border-radius:3px"></div>
<svg style="left:1377px;top:722px" width="70" height="70" viewBox="0 0 100 100"><defs><clipPath id="ct722"><circle cx="50" cy="50" r="50"/></clipPath></defs><g clip-path="url(#ct722)"><rect width="100" height="100" fill="#a8a8a8"/>
<rect x="70" y="0" width="30" height="100" fill="#b5b5b5"/>
<path d="M22 30 Q30 5 60 5 Q80 8 85 35 L86 55 Q80 75 60 80 Q35 82 25 60z" fill="#d8d8d8"/>
<path d="M30 12 Q45 8 60 14 Q50 20 40 22z" fill="#eee"/>
<path d="M5 25 Q18 12 30 18 L28 55 Q18 50 10 55z" fill="#111"/>
<path d="M68 8 Q80 12 84 38 L80 38 Q78 20 68 12z" fill="#222"/>
<path d="M22 45 H82" stroke="#222" stroke-width="3"/>
<rect x="34" y="40" width="22" height="18" rx="4" fill="#e8e8e8" stroke="#1a1a1a" stroke-width="4"/>
<rect x="60" y="38" width="20" height="18" rx="4" fill="#e8e8e8" stroke="#1a1a1a" stroke-width="4"/>
<path d="M10 70 Q30 55 55 60 Q70 70 75 85 L60 100 H10z" fill="#f0f0f0"/>
<path d="M20 75 Q35 68 50 72 M18 85 Q35 78 55 82" stroke="#888" stroke-width="3" fill="none"/>
<path d="M75 60 Q92 70 95 80 L80 100 H62z" fill="#f5f5f5"/>
<path d="M38 82 L52 78 L56 92 L42 96z" fill="#111"/>
<circle cx="70" cy="86" r="6" fill="#666"/></g></svg>
<div class="a" style="left:1286px;top:814px;width:60px;height:22px;background:#0e0f10"></div>
<svg style="left:1292px;top:818px" width="14" height="15"><rect x="4" y="0" width="6" height="9" rx="3" fill="#e6e6e6"/><path d="M2.8 6.5a4.2 4.2 0 0 0 8.4 0" fill="none" stroke="#e6e6e6" stroke-width="1.3"/><rect x="6.4" y="11" width="1.3" height="3" fill="#e6e6e6"/><path d="M1 13L13 1" stroke="#e0443a" stroke-width="1.4"/></svg>
<div class="t" style="left:1308px;top:820px;font-size:11px;color:#fff">刘志明</div>
<div class="a" style="left:1285px;top:846px;width:256px;height:143px;background:#222426;border:1px solid #4a4c4f;border-radius:3px"></div>
<svg style="left:1377px;top:875px" width="70" height="70" viewBox="0 0 100 100"><defs><clipPath id="ct875"><circle cx="50" cy="50" r="50"/></clipPath></defs><g clip-path="url(#ct875)"><rect width="100" height="100" fill="#b8b8b8"/>
<path d="M20 35 Q20 5 50 5 Q80 5 80 35 V100 H20z" fill="#f0c830"/>
<rect x="18" y="30" width="64" height="8" fill="#333"/>
<circle cx="37" cy="34" r="12" fill="#ddd" stroke="#666" stroke-width="4"/>
<circle cx="63" cy="34" r="12" fill="#ddd" stroke="#666" stroke-width="4"/>
<circle cx="37" cy="35" r="4" fill="#4a3a20"/><circle cx="63" cy="35" r="4" fill="#4a3a20"/>
<path d="M40 55 Q50 50 60 55" stroke="#6a4a10" stroke-width="2" fill="none"/>
<path d="M20 68 H80 V100 H20z" fill="#2d5fa6"/>
<path d="M28 62 L36 70 M72 62 L64 70" stroke="#2d5fa6" stroke-width="4"/>
<path d="M10 80 L40 74 L45 95 L15 100z" fill="#eee"/>
<path d="M15 84 L22 82 L24 90 M30 80 L36 86" stroke="#222" stroke-width="3"/></g></svg>
<div class="a" style="left:1286px;top:966px;width:48px;height:22px;background:#0e0f10"></div>
<svg style="left:1292px;top:970px" width="14" height="15"><rect x="4" y="0" width="6" height="9" rx="3" fill="#e6e6e6"/><path d="M2.8 6.5a4.2 4.2 0 0 0 8.4 0" fill="none" stroke="#e6e6e6" stroke-width="1.3"/><rect x="6.4" y="11" width="1.3" height="3" fill="#e6e6e6"/><path d="M1 13L13 1" stroke="#e0443a" stroke-width="1.4"/></svg>
<div class="t" style="left:1308px;top:972px;font-size:11px;color:#fff">詹梅</div>


<div class="a" style="left:1380px;top:952px;width:70px;height:30px;background:rgba(30,31,33,.6);filter:blur(6px)"></div>
<svg style="left:1409px;top:75px" width="12" height="7"><path d="M1 6l5-5 5 5" fill="none" stroke="#aaa" stroke-width="1.3"/></svg>
<svg style="left:1409px;top:965px" width="12" height="7"><path d="M1 1l5 5 5-5" fill="none" stroke="#eee" stroke-width="1.5"/></svg>
<div class="a" style="left:1277px;top:524px;width:1px;height:24px;background:#ccc"></div>
<div class="a" style="left:1280px;top:524px;width:1px;height:24px;background:#ccc"></div>
<!-- ===== member panel ===== -->
<div class="a" style="left:1549px;top:30px;width:371px;height:1010px;background:#fff"></div>
<div class="a" style="left:1892px;top:31px;width:28px;height:29px;background:#eeeeee;border-left:1px solid #dedede;border-bottom:1px solid #dedede"></div>
<svg style="left:1901px;top:41px" width="10" height="9"><path d="M0 1h10M0 4.5h10M0 8h10" stroke="#777" stroke-width="1.2"/></svg>
<svg style="left:1556px;top:37px" width="14" height="14"><circle cx="7" cy="3.6" r="3.4" fill="#8a8a8a"/><path d="M0 14c0-5 3-7.5 7-7.5s7 2.5 7 7.5z" fill="#8a8a8a"/></svg>
<div class="t" style="left:1574px;top:38px;font-size:12.5px;color:#222">管理成员(11)</div>
<svg style="left:1862px;top:39px" width="12" height="11"><path d="M7 .5H.5v10h6" fill="none" stroke="#999" stroke-width="1"/><path d="M5 4h7M5 6.5h7M5 9h7" stroke="#999" stroke-width="1"/></svg>
<svg style="left:1878px;top:39px" width="10" height="10"><path d="M.5.5l9 9M9.5.5l-9 9" stroke="#888" stroke-width="1.1"/></svg>
<div class="a" style="left:1562px;top:64px;width:346px;height:28px;border:1px solid #e3e3e3;background:#fff"></div>
<svg style="left:1570px;top:71px" width="13" height="13"><circle cx="5.5" cy="5.5" r="4.6" fill="none" stroke="#b5b5b5" stroke-width="1.2"/><path d="M9 9l3.5 3.5" stroke="#b5b5b5" stroke-width="1.3"/></svg>
<div class="t" style="left:1586px;top:71px;font-size:12px;color:#999">搜索成员</div>
<svg style="left:1568px;top:117px" width="30" height="30" viewBox="0 0 100 100"><defs><clipPath id="cm0"><circle cx="50" cy="50" r="50"/></clipPath></defs><g clip-path="url(#cm0)"><defs><filter id="cbm0"><feGaussianBlur stdDeviation="2.5"/></filter></defs>
<rect width="100" height="100" fill="#d4c2b4"/>
<g filter="url(#cbm0)">
<rect x="0" y="0" width="25" height="100" fill="#cdb9a8"/>
<rect x="78" y="0" width="22" height="100" fill="#d9c8b8"/>
<path d="M15 25 L35 30 L65 30 L78 12 L85 50 L80 80 Q60 100 40 100 Q22 90 18 60z" fill="#e0d2c8"/>
<path d="M65 25 L80 15 L86 45 L70 45z" fill="#c8966a"/>
<path d="M18 35 L32 35 L30 50 L20 50z" fill="#c8a88a"/>
<path d="M30 55 Q50 45 72 55 Q75 85 50 100 Q28 85 30 55z" fill="#ece2e2"/>
<ellipse cx="38" cy="55" rx="8" ry="6" fill="#e0a0a8"/>
<ellipse cx="60" cy="52" rx="9" ry="6" fill="#d89a8a"/>
<path d="M35 85 Q50 80 62 85 L60 100 H38z" fill="#c8b8d0"/>
</g>
<path d="M32 30 q5-5 10 0M52 28 q5-5 10 0" stroke="#1a1a1a" stroke-width="3.5" fill="none"/>
<ellipse cx="50" cy="61" rx="6" ry="3.5" fill="#e8282e"/></g></svg>
<div class="t" style="left:1608px;top:118px;font-size:12px;color:#151515">成研</div>
<div class="t" style="left:1608px;top:135px;font-size:12px;color:#999">(联席主持人, 我)</div>
<svg style="left:1871px;top:124px" width="14" height="16"><rect x="4" y="0" width="6" height="10" rx="3" fill="#cfcfcf"/><path d="M2.3 7a4.7 4.7 0 0 0 9.4 0" fill="none" stroke="#cfcfcf" stroke-width="1.1"/><path d="M7 12v3M4.5 15.3h5" stroke="#cfcfcf" stroke-width="1.1"/><path d="M1 14L13 2" stroke="#e0685e" stroke-width="1.2"/></svg>
<svg style="left:1894px;top:127px" width="16" height="11"><rect x="0" y="0.5" width="11" height="10" rx="1" fill="#d2d2d2"/><path d="M11 4l5-3v9l-5-3z" fill="#d2d2d2"/><path d="M.5 10.5L10 .5" stroke="#e0685e" stroke-width="1.2"/></svg>
<svg style="left:1568px;top:161px" width="30" height="30" viewBox="0 0 100 100"><defs><clipPath id="cm1"><circle cx="50" cy="50" r="50"/></clipPath></defs><g clip-path="url(#cm1)"><rect width="100" height="100" fill="#9cc6cc"/>
<path d="M0 0 H100 V30 Q70 20 40 30 T0 28z" fill="#7fb5c0"/>
<path d="M10 15 q10-6 20 0 q10-5 18 2 H10z" fill="#d9e8e6" opacity=".8"/>
<rect y="40" width="100" height="8" fill="#c8d1c2"/>
<path d="M0 46 H100 V100 H0z" fill="#b6a27a"/>
<path d="M0 45 L35 40 L40 48 L0 56z" fill="#8e9a8e"/>
<path d="M80 20 L84 45 L76 45z" fill="#556"/>
<path d="M44 46 L56 46 L90 100 L10 100z" fill="#7c6a52"/>
<path d="M47 46 L20 100 M53 46 L80 100" stroke="#ddd8cc" stroke-width="2"/>
<path d="M30 70 H70 M25 80 H75 M20 90 H80" stroke="#5a4a3a" stroke-width="2"/>
<path d="M0 60 L30 50 L10 100 H0z" fill="#9e8a62"/></g></svg>
<div class="t" style="left:1608px;top:162px;font-size:12px;color:#151515">软件学院—郭培荣</div>
<div class="t" style="left:1608px;top:179px;font-size:12px;color:#999">(主持人)</div>
<svg style="left:1871px;top:168px" width="14" height="16"><rect x="4" y="0" width="6" height="10" rx="3" fill="#cfcfcf"/><path d="M2.3 7a4.7 4.7 0 0 0 9.4 0" fill="none" stroke="#cfcfcf" stroke-width="1.1"/><path d="M7 12v3M4.5 15.3h5" stroke="#cfcfcf" stroke-width="1.1"/></svg>
<svg style="left:1894px;top:171px" width="16" height="11"><rect x="0" y="0.5" width="11" height="10" rx="1" fill="#d2d2d2"/><path d="M11 4l5-3v9l-5-3z" fill="#d2d2d2"/><path d="M.5 10.5L10 .5" stroke="#e0685e" stroke-width="1.2"/></svg>
<svg style="left:1568px;top:205px" width="30" height="30" viewBox="0 0 100 100"><defs><clipPath id="cm2"><circle cx="50" cy="50" r="50"/></clipPath></defs><g clip-path="url(#cm2)"><rect width="100" height="100" fill="#4a8ad8"/>
<rect width="100" height="30" fill="#3a7fd6"/>
<path d="M20 20 Q40 16 60 20 T90 21 L88 24 Q60 24 20 24z" fill="#e6f0fa" opacity=".9"/>
<path d="M0 32 Q30 28 60 34 T100 32 V42 Q60 36 30 42 T0 40z" fill="#2d63b8"/>
<path d="M0 42 Q40 38 70 44 T100 44 V56 H0z" fill="#a7c6ea"/>
<path d="M0 50 Q40 48 100 52 V100 H0z" fill="#e9f2f8"/>
<path d="M0 45 L10 46 L20 55 L28 58 L22 62 L0 62z" fill="#3e6a50"/>
<path d="M62 50 L72 45 L85 46 L95 50 L100 58 L92 62 L70 58z" fill="#4a7060"/>
<path d="M58 62 L64 56 L72 58 L78 52 L86 60 L90 70 L70 74 L60 72z" fill="#3b6445"/>
<path d="M15 67 Q30 62 45 66 L52 74 L30 72 L12 74z" fill="#30583a"/>
<rect x="27" y="68" width="2.5" height="30" fill="#2a3a2a"/>
<path d="M30 84 Q45 80 58 86 L50 90 Q40 86 32 90z" fill="#3a6a40"/>
<path d="M80 80 L100 72 V100 H78z" fill="#dfe8ee"/></g></svg>
<div class="t" style="left:1608px;top:214px;font-size:12px;color:#151515">张仕进</div>
<svg style="left:1871px;top:212px" width="14" height="16"><rect x="4" y="0" width="6" height="10" rx="3" fill="#cfcfcf"/><path d="M2.3 7a4.7 4.7 0 0 0 9.4 0" fill="none" stroke="#cfcfcf" stroke-width="1.1"/><path d="M7 12v3M4.5 15.3h5" stroke="#cfcfcf" stroke-width="1.1"/></svg>
<svg style="left:1894px;top:215px" width="16" height="11"><rect x="0" y="0.5" width="11" height="10" rx="1" fill="#d2d2d2"/><path d="M11 4l5-3v9l-5-3z" fill="#d2d2d2"/><path d="M.5 10.5L10 .5" stroke="#e0685e" stroke-width="1.2"/></svg>
<svg style="left:1848px;top:214px" width="12" height="12"><rect x="0" y="0" width="12" height="9" rx="1" fill="#d5d5d5"/><path d="M4 7c1-2.5 2.5-3.3 4.5-3.3V2.3L10.5 4.5 8.5 6.7V5.3C6.8 5.3 5.5 5.8 4 7z" fill="#fff"/><rect x="3" y="10.5" width="6" height="1.3" fill="#d5d5d5"/></svg>
<div class="a" style="left:1568px;top:249px;width:30px;height:30px;border-radius:50%;background:#1677ff"></div>
<div class="t" style="left:1571px;top:258px;font-size:12px;color:#fff;letter-spacing:-1px">云卫</div>
<div class="t" style="left:1608px;top:258px;font-size:12px;color:#151515">董云卫</div>
<svg style="left:1871px;top:256px" width="14" height="16"><rect x="4" y="0" width="6" height="10" rx="3" fill="#cfcfcf"/><path d="M4 5h6v2a3 3 0 0 1-6 0z" fill="#3ad24a"/><path d="M2.3 7a4.7 4.7 0 0 0 9.4 0" fill="none" stroke="#cfcfcf" stroke-width="1.1"/><path d="M7 12v3M4.5 15.3h5" stroke="#cfcfcf" stroke-width="1.1"/></svg>
<svg style="left:1894px;top:259px" width="16" height="11"><rect x="0" y="0.5" width="11" height="10" rx="1" fill="#d2d2d2"/><path d="M11 4l5-3v9l-5-3z" fill="#d2d2d2"/><path d="M.5 10.5L10 .5" stroke="#e0685e" stroke-width="1.2"/></svg>
<svg style="left:1568px;top:293px" width="30" height="30" viewBox="0 0 100 100"><defs><clipPath id="cm4"><circle cx="50" cy="50" r="50"/></clipPath></defs><g clip-path="url(#cm4)"><rect width="100" height="100" fill="#e8b8c8"/>
<path d="M0 0 H50 V100 H0z" fill="#c080a8"/>
<path d="M10 20 Q25 5 45 20 L45 80 Q25 90 10 80z" fill="#f6e0d8"/>
<path d="M55 25 Q75 10 95 28 L95 85 Q75 95 55 85z" fill="#f8e6dc"/>
<path d="M5 10 Q30 0 50 25 L40 40 Q25 20 8 40z" fill="#7a4a9a"/>
<path d="M50 20 Q75 0 100 25 L100 50 Q80 30 60 45z" fill="#4a3a6a"/>
<circle cx="25" cy="50" r="5" fill="#5a8ad0"/><circle cx="75" cy="55" r="5" fill="#c84a4a"/>
<path d="M55 85 Q75 75 100 90 V100 H50z" fill="#c83a3a"/></g></svg>
<div class="t" style="left:1608px;top:302px;font-size:12px;color:#151515">FARHAN ULLAH</div>
<svg style="left:1871px;top:300px" width="14" height="16"><rect x="4" y="0" width="6" height="10" rx="3" fill="#cfcfcf"/><path d="M2.3 7a4.7 4.7 0 0 0 9.4 0" fill="none" stroke="#cfcfcf" stroke-width="1.1"/><path d="M7 12v3M4.5 15.3h5" stroke="#cfcfcf" stroke-width="1.1"/><path d="M1 14L13 2" stroke="#e0685e" stroke-width="1.2"/></svg>
<svg style="left:1894px;top:303px" width="16" height="11"><rect x="0" y="0.5" width="11" height="10" rx="1" fill="#d2d2d2"/><path d="M11 4l5-3v9l-5-3z" fill="#d2d2d2"/><path d="M.5 10.5L10 .5" stroke="#e0685e" stroke-width="1.2"/></svg>
<svg style="left:1568px;top:337px" width="30" height="30" viewBox="0 0 100 100"><defs><clipPath id="cm5"><circle cx="50" cy="50" r="50"/></clipPath></defs><g clip-path="url(#cm5)"><defs><linearGradient id="psky_m5" x1="0" y1="0" x2="1" y2="0.3"><stop offset="0" stop-color="#1a4fb8"/><stop offset=".6" stop-color="#142a6a"/><stop offset="1" stop-color="#5a3a6a"/></linearGradient><linearGradient id="pbase_m5" x1="0" y1="0" x2="0" y2="1"><stop offset="0" stop-color="#7a4a2a"/><stop offset=".5" stop-color="#c0602a"/><stop offset="1" stop-color="#5a2a1a"/></linearGradient></defs>
<rect width="100" height="100" fill="#fff"/>
<rect y="13" width="100" height="74" fill="url(#psky_m5)"/>
<ellipse cx="30" cy="40" rx="10" ry="4" fill="#0c1a40" opacity=".7"/>
<path d="M0 60 L15 56 L30 54 L42 52 L70 50 L88 53 L100 56 V87 H0z" fill="url(#pbase_m5)"/>
<path d="M18 58 L30 54 L42 52 L70 50 L90 54 L96 60 L85 66 L40 68 L20 64z" fill="#f0e6d8"/>
<path d="M42 52 L70 50 L68 55 L44 56z" fill="#c8584a"/>
<path d="M25 62 L90 60 L88 64 L28 66z" fill="#fff8e8" opacity=".8"/>
<circle cx="88" cy="72" r="4" fill="#ffb040" opacity=".8"/>
<path d="M0 60 L18 58 L22 66 L0 70z" fill="#4a4a5a"/></g></svg>
<div class="t" style="left:1608px;top:346px;font-size:12px;color:#151515">刘 / G</div>
<svg style="left:1871px;top:344px" width="14" height="16"><rect x="4" y="0" width="6" height="10" rx="3" fill="#cfcfcf"/><path d="M2.3 7a4.7 4.7 0 0 0 9.4 0" fill="none" stroke="#cfcfcf" stroke-width="1.1"/><path d="M7 12v3M4.5 15.3h5" stroke="#cfcfcf" stroke-width="1.1"/><path d="M1 14L13 2" stroke="#e0685e" stroke-width="1.2"/></svg>
<svg style="left:1894px;top:347px" width="16" height="11"><rect x="0" y="0.5" width="11" height="10" rx="1" fill="#d2d2d2"/><path d="M11 4l5-3v9l-5-3z" fill="#d2d2d2"/><path d="M.5 10.5L10 .5" stroke="#e0685e" stroke-width="1.2"/></svg>
<svg style="left:1568px;top:381px" width="30" height="30" viewBox="0 0 100 100"><defs><clipPath id="cm6"><circle cx="50" cy="50" r="50"/></clipPath></defs><g clip-path="url(#cm6)"><rect width="100" height="100" fill="#a8a8a8"/>
<rect x="70" y="0" width="30" height="100" fill="#b5b5b5"/>
<path d="M22 30 Q30 5 60 5 Q80 8 85 35 L86 55 Q80 75 60 80 Q35 82 25 60z" fill="#d8d8d8"/>
<path d="M30 12 Q45 8 60 14 Q50 20 40 22z" fill="#eee"/>
<path d="M5 25 Q18 12 30 18 L28 55 Q18 50 10 55z" fill="#111"/>
<path d="M68 8 Q80 12 84 38 L80 38 Q78 20 68 12z" fill="#222"/>
<path d="M22 45 H82" stroke="#222" stroke-width="3"/>
<rect x="34" y="40" width="22" height="18" rx="4" fill="#e8e8e8" stroke="#1a1a1a" stroke-width="4"/>
<rect x="60" y="38" width="20" height="18" rx="4" fill="#e8e8e8" stroke="#1a1a1a" stroke-width="4"/>
<path d="M10 70 Q30 55 55 60 Q70 70 75 85 L60 100 H10z" fill="#f0f0f0"/>
<path d="M20 75 Q35 68 50 72 M18 85 Q35 78 55 82" stroke="#888" stroke-width="3" fill="none"/>
<path d="M75 60 Q92 70 95 80 L80 100 H62z" fill="#f5f5f5"/>
<path d="M38 82 L52 78 L56 92 L42 96z" fill="#111"/>
<circle cx="70" cy="86" r="6" fill="#666"/></g></svg>
<div class="t" style="left:1608px;top:390px;font-size:12px;color:#151515">刘志明</div>
<svg style="left:1871px;top:388px" width="14" height="16"><rect x="4" y="0" width="6" height="10" rx="3" fill="#cfcfcf"/><path d="M2.3 7a4.7 4.7 0 0 0 9.4 0" fill="none" stroke="#cfcfcf" stroke-width="1.1"/><path d="M7 12v3M4.5 15.3h5" stroke="#cfcfcf" stroke-width="1.1"/><path d="M1 14L13 2" stroke="#e0685e" stroke-width="1.2"/></svg>
<svg style="left:1894px;top:391px" width="16" height="11"><rect x="0" y="0.5" width="11" height="10" rx="1" fill="#d2d2d2"/><path d="M11 4l5-3v9l-5-3z" fill="#d2d2d2"/><path d="M.5 10.5L10 .5" stroke="#e0685e" stroke-width="1.2"/></svg>
<svg style="left:1568px;top:425px" width="30" height="30" viewBox="0 0 100 100"><defs><clipPath id="cm7"><circle cx="50" cy="50" r="50"/></clipPath></defs><g clip-path="url(#cm7)"><rect width="100" height="100" fill="#d6e4ef"/>
<rect y="0" width="100" height="35" fill="#c6dcec"/>
<rect x="5" y="35" width="40" height="40" fill="#e8c8c8"/>
<rect x="55" y="40" width="40" height="35" fill="#d8b0b8"/>
<rect x="10" y="45" width="6" height="8" fill="#8a7a9a"/><rect x="25" y="45" width="6" height="8" fill="#8a7a9a"/>
<rect x="60" y="50" width="6" height="8" fill="#7a6a8a"/><rect x="75" y="50" width="6" height="8" fill="#7a6a8a"/>
<path d="M40 55 L45 100 H35z" fill="#6a5a8a"/>
<rect y="80" width="100" height="20" fill="#6a8a5a"/></g></svg>
<div class="t" style="left:1608px;top:434px;font-size:12px;color:#151515">王雄达</div>
<svg style="left:1871px;top:432px" width="14" height="16"><rect x="4" y="0" width="6" height="10" rx="3" fill="#cfcfcf"/><path d="M2.3 7a4.7 4.7 0 0 0 9.4 0" fill="none" stroke="#cfcfcf" stroke-width="1.1"/><path d="M7 12v3M4.5 15.3h5" stroke="#cfcfcf" stroke-width="1.1"/><path d="M1 14L13 2" stroke="#e0685e" stroke-width="1.2"/></svg>
<svg style="left:1894px;top:435px" width="16" height="11"><rect x="0" y="0.5" width="11" height="10" rx="1" fill="#d2d2d2"/><path d="M11 4l5-3v9l-5-3z" fill="#d2d2d2"/><path d="M.5 10.5L10 .5" stroke="#e0685e" stroke-width="1.2"/></svg>
<div class="a" style="left:1568px;top:469px;width:30px;height:30px;border-radius:50%;background:#1677ff"></div>
<div class="t" style="left:1571px;top:478px;font-size:12px;color:#fff;letter-spacing:-1px">兴富</div>
<div class="t" style="left:1608px;top:478px;font-size:12px;color:#151515">吴兴富</div>
<svg style="left:1871px;top:476px" width="14" height="16"><rect x="4" y="0" width="6" height="10" rx="3" fill="#cfcfcf"/><path d="M2.3 7a4.7 4.7 0 0 0 9.4 0" fill="none" stroke="#cfcfcf" stroke-width="1.1"/><path d="M7 12v3M4.5 15.3h5" stroke="#cfcfcf" stroke-width="1.1"/><path d="M1 14L13 2" stroke="#e0685e" stroke-width="1.2"/></svg>
<svg style="left:1894px;top:479px" width="16" height="11"><rect x="0" y="0.5" width="11" height="10" rx="1" fill="#d2d2d2"/><path d="M11 4l5-3v9l-5-3z" fill="#d2d2d2"/><path d="M.5 10.5L10 .5" stroke="#e0685e" stroke-width="1.2"/></svg>
<svg style="left:1568px;top:513px" width="30" height="30" viewBox="0 0 100 100"><defs><clipPath id="cm9"><circle cx="50" cy="50" r="50"/></clipPath></defs><g clip-path="url(#cm9)"><rect width="100" height="100" fill="#141210"/>
<circle cx="52" cy="50" r="38" fill="none" stroke="#3a3028" stroke-width="5" stroke-dasharray="6 4"/>
<circle cx="52" cy="50" r="26" fill="none" stroke="#6a5030" stroke-width="4" stroke-dasharray="5 3"/>
<circle cx="52" cy="50" r="15" fill="none" stroke="#9a7a4a" stroke-width="3"/>
<circle cx="52" cy="50" r="6" fill="#c09a5a"/></g></svg>
<div class="t" style="left:1608px;top:522px;font-size:12px;color:#151515">吴逾强</div>
<svg style="left:1871px;top:520px" width="14" height="16"><rect x="4" y="0" width="6" height="10" rx="3" fill="#cfcfcf"/><path d="M2.3 7a4.7 4.7 0 0 0 9.4 0" fill="none" stroke="#cfcfcf" stroke-width="1.1"/><path d="M7 12v3M4.5 15.3h5" stroke="#cfcfcf" stroke-width="1.1"/><path d="M1 14L13 2" stroke="#e0685e" stroke-width="1.2"/></svg>
<svg style="left:1894px;top:523px" width="16" height="11"><rect x="0" y="0.5" width="11" height="10" rx="1" fill="#d2d2d2"/><path d="M11 4l5-3v9l-5-3z" fill="#d2d2d2"/><path d="M.5 10.5L10 .5" stroke="#e0685e" stroke-width="1.2"/></svg>
<svg style="left:1568px;top:557px" width="30" height="30" viewBox="0 0 100 100"><defs><clipPath id="cm10"><circle cx="50" cy="50" r="50"/></clipPath></defs><g clip-path="url(#cm10)"><rect width="100" height="100" fill="#b8b8b8"/>
<path d="M20 35 Q20 5 50 5 Q80 5 80 35 V100 H20z" fill="#f0c830"/>
<rect x="18" y="30" width="64" height="8" fill="#333"/>
<circle cx="37" cy="34" r="12" fill="#ddd" stroke="#666" stroke-width="4"/>
<circle cx="63" cy="34" r="12" fill="#ddd" stroke="#666" stroke-width="4"/>
<circle cx="37" cy="35" r="4" fill="#4a3a20"/><circle cx="63" cy="35" r="4" fill="#4a3a20"/>
<path d="M40 55 Q50 50 60 55" stroke="#6a4a10" stroke-width="2" fill="none"/>
<path d="M20 68 H80 V100 H20z" fill="#2d5fa6"/>
<path d="M28 62 L36 70 M72 62 L64 70" stroke="#2d5fa6" stroke-width="4"/>
<path d="M10 80 L40 74 L45 95 L15 100z" fill="#eee"/>
<path d="M15 84 L22 82 L24 90 M30 80 L36 86" stroke="#222" stroke-width="3"/></g></svg>
<div class="t" style="left:1608px;top:566px;font-size:12px;color:#151515">詹梅</div>
<svg style="left:1871px;top:564px" width="14" height="16"><rect x="4" y="0" width="6" height="10" rx="3" fill="#cfcfcf"/><path d="M2.3 7a4.7 4.7 0 0 0 9.4 0" fill="none" stroke="#cfcfcf" stroke-width="1.1"/><path d="M7 12v3M4.5 15.3h5" stroke="#cfcfcf" stroke-width="1.1"/><path d="M1 14L13 2" stroke="#e0685e" stroke-width="1.2"/></svg>
<svg style="left:1894px;top:567px" width="16" height="11"><rect x="0" y="0.5" width="11" height="10" rx="1" fill="#d2d2d2"/><path d="M11 4l5-3v9l-5-3z" fill="#d2d2d2"/><path d="M.5 10.5L10 .5" stroke="#e0685e" stroke-width="1.2"/></svg>
<div class="a" style="left:1627px;top:703px;width:244px;height:36px;background:#35373b;border-radius:3px"></div>
<div class="a" style="left:1627px;top:703px;width:35px;height:36px;background:#303236;border-radius:3px 0 0 3px"></div>
<div class="a" style="left:1662px;top:705px;width:1px;height:32px;background:#26282b"></div>
<svg style="left:1638px;top:713px" width="14" height="16"><rect x="4" y="0" width="6" height="10" rx="3" fill="#6a6c70"/><path d="M2.3 7a4.7 4.7 0 0 0 9.4 0" fill="none" stroke="#6a6c70" stroke-width="1.1"/><path d="M7 12v3M4.5 15.3h5" stroke="#6a6c70" stroke-width="1.1"/><path d="M1 14L13 2" stroke="#d0503e" stroke-width="1.2"/></svg>
<div class="t" style="left:1670px;top:715px;font-size:12px;color:#fff">正在讲话: 董云卫;</div>
<div class="a" style="left:1779px;top:710px;width:46px;height:24px;background:#55575b;filter:blur(2.5px);clip-path:polygon(0 50%,30% 0,50% 40%,70% 0,100% 50%,70% 100%,50% 60%,30% 100%)"></div>
<div class="a" style="left:1720px;top:928px;width:199px;height:26px;background:#fff;border:1px solid #d8dfe6;border-radius:3px"></div>
<svg style="left:1694px;top:924px" width="32" height="30"><rect x="3" y="3" width="25" height="24" rx="5" fill="#ee5a24" transform="rotate(-14 16 15)"/><path d="M23 10C19 6.5 11 8 11.5 12S21 14.5 21 18.5S12 23 8.5 20" fill="none" stroke="#fff" stroke-width="3.4" stroke-linecap="round"/></svg>
<div class="t" style="left:1731px;top:933px;font-size:14px;-webkit-text-stroke:.8px #1a6fd0;color:#1a6fd0">中</div>
<div class="t" style="left:1757px;top:930px;font-size:16px;font-weight:bold;color:#1a6fd0">°,</div>
<svg style="left:1780px;top:934px" width="15" height="15"><circle cx="7.5" cy="7.5" r="7.5" fill="#1a6fd0"/><circle cx="5" cy="5.5" r="1.1" fill="#fff"/><circle cx="10" cy="5.5" r="1.1" fill="#fff"/><path d="M3.5 8.5h8a4 4 0 0 1-8 0z" fill="#fff"/></svg>
<svg style="left:1806px;top:932px" width="10" height="17"><rect x="2" y="0" width="6" height="10" rx="3" fill="#1a6fd0"/><path d="M.7 7a4.3 4.3 0 0 0 8.6 0" fill="none" stroke="#1a6fd0" stroke-width="1.3"/><rect x="4.3" y="12" width="1.4" height="4" fill="#1a6fd0"/></svg>
<svg style="left:1828px;top:935px" width="15" height="12"><rect x=".6" y=".6" width="13.8" height="10.8" fill="none" stroke="#1a6fd0" stroke-width="1.2"/><path d="M3 3.5h1.5M6 3.5h1.5M9 3.5h1.5M3 6h1.5M6 6h1.5M9 6h1.5M3 8.5h9" stroke="#1a6fd0" stroke-width="1.2"/></svg>
<svg style="left:1852px;top:932px" width="15" height="16"><circle cx="6" cy="4" r="3.5" fill="#ccc"/><path d="M0 14c0-4 2.5-6 6-6s6 2 6 6z" fill="#ccc"/><rect x="8" y="9" width="7" height="6" fill="#fff" stroke="#bbb"/></svg>
<svg style="left:1875px;top:933px" width="16" height="15"><path d="M5 0L0 3l2 4 2-1v9h8V6l2 1 2-4-5-3c-.5 1.5-1.5 2-3 2S5.5 1.5 5 0z" fill="#1a6fd0"/></svg>
<svg style="left:1900px;top:934px" width="14" height="14"><rect x="0" y="0" width="6" height="6" rx="1.5" fill="#1a6fd0"/><rect x="8" y="0" width="6" height="6" rx="1.5" fill="#1a6fd0"/><rect x="0" y="8" width="6" height="6" rx="1.5" fill="#1a6fd0"/><rect x="8" y="8" width="6" height="6" rx="1.5" fill="#1a6fd0"/></svg>
<div class="a" style="left:1549px;top:980px;width:371px;height:1px;background:#ececec"></div>
<div class="a" style="left:1595px;top:997px;width:87px;height:26px;border:1px solid #e4e4e4;background:#fff"></div>
<div class="a" style="left:1699px;top:997px;width:88px;height:26px;border:1px solid #e4e4e4;background:#fff"></div>
<div class="a" style="left:1803px;top:997px;width:72px;height:26px;border:1px solid #e4e4e4;background:#fff"></div>
<div class="t" style="left:1614px;top:1003px;font-size:12px;color:#1f6fc5;-webkit-text-stroke:.25px #1f6fc5">全体静音</div>
<div class="t" style="left:1706px;top:1003px;font-size:12px;color:#1f6fc5;-webkit-text-stroke:.25px #1f6fc5">解除全体静音</div>
<div class="t" style="left:1822px;top:1003px;font-size:12px;color:#1f6fc5;-webkit-text-stroke:.25px #1f6fc5">更多</div>
<svg style="left:1849px;top:1008px" width="7" height="4"><path d="M0 0h7L3.5 4z" fill="#1f6fc5"/></svg>


<!-- ===== bottom toolbar ===== -->
<div class="a" style="left:0;top:988px;width:1549px;height:52px;background:#f8f8f9"></div>
<!-- unmute -->
<svg style="left:22px;top:995px" width="20" height="24"><rect x="6" y="0" width="8" height="14" rx="4" fill="#4a4a4a"/><path d="M3 10a7 7 0 0 0 14 0" fill="none" stroke="#4a4a4a" stroke-width="1.6"/><path d="M10 17v4M5 22h10" stroke="#4a4a4a" stroke-width="1.8"/><path d="M2 20L18 3" stroke="#e8524a" stroke-width="1.8"/></svg>
<div class="t" style="left:-18px;width:100px;text-align:center;top:1021px;font-size:11px;color:#333">解除静音</div>
<svg style="left:60px;top:1010px" width="10" height="6"><path d="M1 5.5l4-4 4 4" fill="none" stroke="#444" stroke-width="1.3"/></svg>
<svg style="left:85px;top:997px" width="26" height="18"><rect x="0" y="1" width="18" height="16" rx="1" fill="#4a4a4a"/><path d="M18 6l7-4v14l-7-4z" fill="#4a4a4a"/><path d="M2 17L17 1" stroke="#f0f0f0" stroke-width="3"/><path d="M2 17L17 1" stroke="#e8524a" stroke-width="1.5"/></svg>
<div class="t" style="left:48px;width:100px;text-align:center;top:1021px;font-size:11px;color:#333">开启视频</div>
<svg style="left:126px;top:1010px" width="10" height="6"><path d="M1 5.5l4-4 4 4" fill="none" stroke="#444" stroke-width="1.3"/></svg>
<!-- share screen -->
<svg style="left:555px;top:997px" width="22" height="21"><rect x="0" y="0" width="22" height="15" rx="1.5" fill="#4a4a4a"/><path d="M6 11c1.5-4 4-5.5 8-5.5V3.5L17.5 7 14 10.5V8.5C10.5 8.5 8.5 9 6 11z" fill="#fff"/><rect x="6" y="18" width="10" height="2" fill="#4a4a4a"/></svg>
<div class="t" style="left:517px;width:100px;text-align:center;top:1021px;font-size:11px;color:#333">共享屏幕</div>
<svg style="left:595px;top:1010px" width="10" height="6"><path d="M1 5.5l4-4 4 4" fill="none" stroke="#444" stroke-width="1.3"/></svg>
<svg style="left:623px;top:995px" width="18" height="22"><path d="M9 0L18 3.5V11C18 16 14 19.5 9 22C4 19.5 0 16 0 11V3.5z" fill="#4a4a4a"/><path d="M5 9.5l4-3.5 4 3.5M5 13.5l4-3.5 4 3.5" fill="none" stroke="#fff" stroke-width="1.6"/></svg>
<div class="t" style="left:582px;width:100px;text-align:center;top:1021px;font-size:11px;color:#333">安全</div>
<svg style="left:674px;top:995px" width="22" height="22"><circle cx="9" cy="4.5" r="4.5" fill="#4a4a4a"/><path d="M0 21c0-7 3.5-10.5 9-10.5 2.5 0 4.5.8 6 2.3V21z" fill="#4a4a4a"/><circle cx="16" cy="16" r="5.5" fill="#4a4a4a" stroke="#f8f8f9" stroke-width="1.5"/><path d="M16 13v6M13 16h6" stroke="#fff" stroke-width="1.5"/></svg>
<div class="t" style="left:635px;width:100px;text-align:center;top:1021px;font-size:11px;color:#333">邀请</div>
<svg style="left:737px;top:995px" width="24" height="22"><circle cx="11" cy="4.8" r="4.8" fill="#4a4a4a"/><path d="M14.5 1.5a5 5 0 0 1 0 7" fill="none" stroke="#4a4a4a" stroke-width="1.2"/><path d="M0 21c0-7 4-10.5 11-10.5s11 3.5 11 10.5z" fill="#4a4a4a"/></svg>
<div class="t" style="left:699px;width:100px;text-align:center;top:1021px;font-size:11px;color:#333">管理成员(11)</div>
<svg style="left:803px;top:997px" width="22" height="21"><path d="M1.5 0h19A1.5 1.5 0 0 1 22 1.5v13A1.5 1.5 0 0 1 20.5 16H13l-3 4v-4H1.5A1.5 1.5 0 0 1 0 14.5v-13A1.5 1.5 0 0 1 1.5 0z" fill="#4a4a4a"/><circle cx="6" cy="8" r="1.5" fill="#fff"/><circle cx="11" cy="8" r="1.5" fill="#fff"/><circle cx="16" cy="8" r="1.5" fill="#fff"/></svg>
<div class="t" style="left:764px;width:100px;text-align:center;top:1021px;font-size:11px;color:#333">聊天</div>
<svg style="left:856px;top:995px" width="23" height="23"><circle cx="11.5" cy="11.5" r="10.5" fill="none" stroke="#4a4a4a" stroke-width="1.6"/><circle cx="11.5" cy="11.5" r="8" fill="#4a4a4a"/></svg>
<div class="t" style="left:817.5px;width:100px;text-align:center;top:1021px;font-size:11px;color:#333">录制</div>
<svg style="left:897px;top:1010px" width="10" height="6"><path d="M1 5.5l4-4 4 4" fill="none" stroke="#444" stroke-width="1.3"/></svg>
<svg style="left:923px;top:995px" width="22" height="22"><rect x="0" y="2" width="9" height="9" rx="1.5" fill="#4a4a4a"/><path d="M16.5 .8l5 5-5 5-5-5z" fill="none" stroke="#4a4a4a" stroke-width="1.4"/><rect x="0" y="13" width="9" height="9" rx="1.5" fill="#4a4a4a"/><rect x="12" y="13" width="9" height="9" rx="1.5" fill="#4a4a4a"/></svg>
<div class="t" style="left:883.5px;width:100px;text-align:center;top:1021px;font-size:11px;color:#333">应用</div>
<svg style="left:976px;top:995px" width="22" height="22"><g fill="#4a4a4a" transform="translate(11 11)"><circle r="7.5"/><g id="tt"><rect x="-2.6" y="-11" width="5.2" height="5" rx="1"/></g><use href="#tt" transform="rotate(45)"/><use href="#tt" transform="rotate(90)"/><use href="#tt" transform="rotate(135)"/><use href="#tt" transform="rotate(180)"/><use href="#tt" transform="rotate(225)"/><use href="#tt" transform="rotate(270)"/><use href="#tt" transform="rotate(315)"/></g><circle cx="11" cy="11" r="3.3" fill="#f8f8f9"/></svg>
<div class="t" style="left:937.5px;width:100px;text-align:center;top:1021px;font-size:11px;color:#333">设置</div>
<!-- leave -->
<div class="a" style="left:1441px;top:996px;width:76px;height:35px;border:1px solid #e58a88;border-radius:3px;background:#fbfbfb"></div>
<div class="t" style="left:1453px;top:1007px;font-size:13px;color:#e05a55;-webkit-text-stroke:.2px #e05a55">离开会议</div>

<!-- ===== windows taskbar ===== -->
<div class="a" style="left:0;top:1040px;width:1920px;height:40px;background:#ecdedd"></div>
<svg style="left:16px;top:1052px" width="16" height="16"><path d="M0 2.2L6.5 1.3v6.2H0zM7.5 1.1L16 0v7.5H7.5zM0 8.5h6.5v6.2L0 13.8zM7.5 8.5H16V16l-8.5-1.1z" fill="#111"/></svg>
<div class="a" style="left:48px;top:1041px;width:343px;height:39px;background:#fff;border:1px solid #d8d0d0;border-bottom:none"></div>
<svg style="left:59px;top:1052px" width="19" height="19"><circle cx="11.5" cy="7" r="6" fill="none" stroke="#222" stroke-width="1.4"/><path d="M7.3 11.2L1 17.5" stroke="#222" stroke-width="1.5"/></svg>
<div class="t" style="left:88px;top:1053px;font-size:14px;color:#333">在这里输入你要搜索的内容</div>
<svg style="left:407px;top:1051px" width="18" height="18"><circle cx="9" cy="9" r="7.5" fill="none" stroke="#111" stroke-width="2"/></svg>
<svg style="left:455px;top:1052px" width="17" height="16"><rect x="1" y="3.5" width="10" height="9" fill="none" stroke="#111" stroke-width="1.4"/><path d="M0 1h12M0 15h12" stroke="#111" stroke-width="1.4"/><rect x="14" y="4" width="2" height="2" fill="#111"/><rect x="14.3" y="7.5" width="1.4" height="7" fill="#111"/></svg>
<svg style="left:503px;top:1050px" width="23" height="20"><rect x="0" y="2" width="23" height="18" rx="1" fill="#f6c94c"/><rect x="0" y="0" width="10" height="4" rx="1" fill="#e0a83a"/><path d="M7 20v-8h10v8h-3v-4.5h-4V20z" fill="#2a7ad0"/></svg>
<div class="a" style="left:540px;top:1040px;width:48px;height:40px;background:#f4b38c"></div>
<div class="a" style="left:540px;top:1077px;width:48px;height:3px;background:#f57a20"></div>
<svg style="left:551px;top:1049px" width="26" height="22"><ellipse cx="9.5" cy="8.5" rx="9" ry="7.5" fill="#3fc34e"/><circle cx="6.5" cy="7" r="1.1" fill="#1a7a2a"/><circle cx="12" cy="7" r="1.1" fill="#1a7a2a"/><ellipse cx="17" cy="14" rx="8" ry="6.5" fill="#f0f0f0"/><circle cx="14.5" cy="13" r=".9" fill="#999"/><circle cx="19" cy="13" r=".9" fill="#999"/></svg>
<div class="a" style="left:589px;top:1040px;width:48px;height:40px;background:#f3ebeb"></div>
<div class="a" style="left:589px;top:1077px;width:48px;height:3px;background:#1f78d8"></div>
<svg style="left:602px;top:1048px" width="22" height="22"><rect width="22" height="22" rx="4" fill="#1a6fe6"/><path d="M3.5 14.5L8 8l3 3.5L14 7l4.5 7.5z" fill="#fff"/><path d="M3.5 14.5L8 8l1.5 2" fill="none" stroke="#1a6fe6" stroke-width="1"/></svg>
<!-- tray -->
<div class="a" style="left:1532px;top:1051px;width:19px;height:19px;border-radius:50%;background:radial-gradient(circle at 40% 35%,#ffe27a,#f5b82a 60%,#ee9a1a)"></div>
<div class="t" style="left:1562px;top:1053px;font-size:14px;color:#222">10°C</div>
<div class="t" style="left:1601px;top:1053px;font-size:14px;color:#222">晴朗</div>
<svg style="left:1645px;top:1056px" width="14" height="8"><path d="M1 7l6-6 6 6" fill="none" stroke="#222" stroke-width="1.3"/></svg>
<svg style="left:1667px;top:1053px" width="16" height="14"><ellipse cx="6.5" cy="6" rx="6" ry="5.3" fill="#3fc34e"/><ellipse cx="11.5" cy="9.5" rx="4.5" ry="3.8" fill="#eee"/></svg>
<svg style="left:1694px;top:1053px" width="14" height="14"><path d="M1 13A12 12 0 0 1 13 1M4 13A9 9 0 0 1 13 4M7 13A6 6 0 0 1 13 7" fill="none" stroke="#222" stroke-width="1.2"/><circle cx="12" cy="12" r="1.5" fill="#222"/></svg>
<svg style="left:1715px;top:1052px" width="18" height="16"><path d="M1 5h3.5L9 1v14l-4.5-4H1z" fill="none" stroke="#222" stroke-width="1.2"/><path d="M11.5 5a4 4 0 0 1 0 6M14 3a7 7 0 0 1 0 10" fill="none" stroke="#222" stroke-width="1.1"/><path d="M16.5 1.5a10 10 0 0 1 0 13" fill="none" stroke="#bbb" stroke-width="1"/></svg>
<div class="t" style="left:1740px;top:1052px;font-size:14px;color:#333">中</div>
<svg style="left:1766px;top:1051px" width="19" height="19"><path d="M2 3L16 1l2 14L4 18z" fill="#ee5a22"/><path d="M13.5 5.5C11 4 6.5 4.5 6.5 7S13 9 13 11.5 8 15 5.5 13" fill="none" stroke="#fff" stroke-width="2.2" stroke-linecap="round"/></svg>
<div class="t" style="left:1815px;top:1045px;font-size:12px;color:#151515">10:18</div>
<div class="t" style="left:1801px;top:1063px;font-size:12px;color:#151515">2022/2/28</div>
<svg style="left:1878px;top:1052px" width="18" height="16"><path d="M.7.7h16.6v11.6H8l-3 3v-3H.7z" fill="none" stroke="#222" stroke-width="1.2"/></svg>
<div class="a" style="left:1915px;top:1040px;width:1px;height:40px;background:#d8cccc"></div>


</body></html>
